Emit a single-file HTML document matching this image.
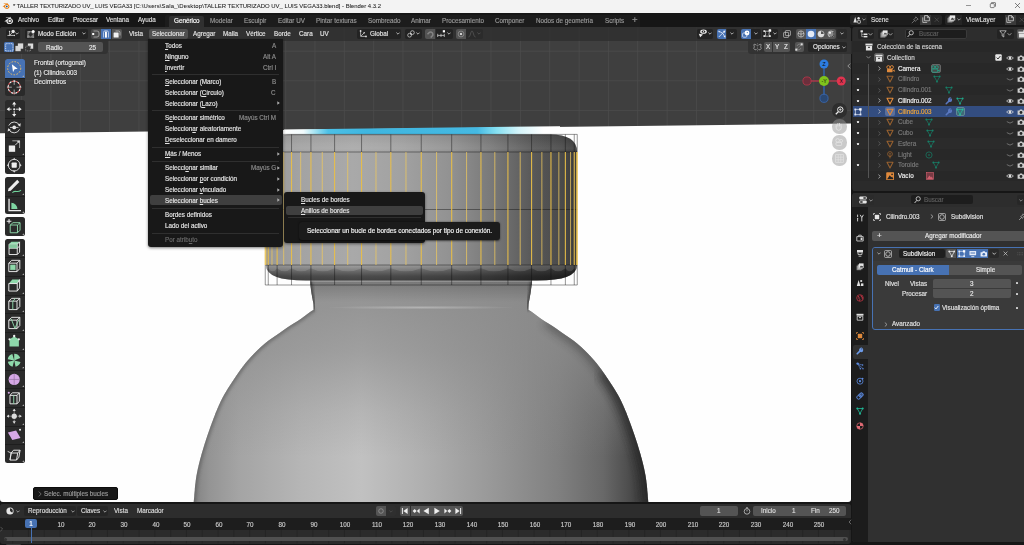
<!DOCTYPE html>
<html lang="es"><head><meta charset="utf-8"><title>Blender</title>
<style>

html,body{margin:0;padding:0;background:#181818;}
body{width:1024px;height:545px;overflow:hidden;font-family:"Liberation Sans",sans-serif;}
#app{position:relative;width:1024px;height:545px;overflow:hidden;background:#161616;font-size:6.3px;line-height:8px;color:#d8d8d8;}
#app div,#app span,#app svg{position:absolute;box-sizing:border-box;}
.t{white-space:nowrap;line-height:8px;height:8px;will-change:transform;-webkit-text-stroke:0.16px currentColor;}
#titlebar{left:0;top:0;width:1024px;height:12.6px;background:#f3f3f3;}
#titlebar .t{-webkit-text-stroke:0.06px currentColor;color:#1b1b1b;font-size:5.96px;left:12.5px;top:2px;}
#topbar{left:0;top:13px;width:1024px;height:14px;background:#161616;}
#topbar .t{top:2.5px;color:#dedede;}
#topbar .ws{color:#989898;top:3.6px;}
#app span.in{position:static;}
.fld{background:#1c1c1c;border-radius:2px;}
.btn{background:#2b2b2b;border-radius:2px;}

#viewport{left:0;top:27px;width:851px;height:475px;background:#3f3f3f;overflow:hidden;border-radius:3px;}

#vhdr{left:0;top:27px;width:851px;height:13.5px;background:rgba(46,46,46,0.8);border-radius:3px 3px 0 0;}
#vhdr .t{top:3px;color:#e2e2e2;}
#vhdr .b{top:1.5px;height:10px;background:#232323;border-radius:2px;}
#vhdr .bl{background:#4772b3;}
#vhdr .g{background:#545454;}
.chev{width:4px;height:3px;}
#tsL{left:0;top:40.5px;width:108px;height:13.5px;background:rgba(48,48,48,0.85);border-radius:0 0 3px 0;}
#tsR{left:747.5px;top:40.5px;width:104px;height:13.5px;background:rgba(48,48,48,0.85);border-radius:0 0 0 3px;}

#tools .grp{left:4.5px;width:20px;background:#2a2a2a;border-radius:2.5px;overflow:hidden;}
#tools .sep{left:0;width:20px;height:0.6px;background:#1e1e1e;}
#tools svg{left:1.8px;}

#menu{left:148px;top:38.5px;width:135.3px;height:208px;background:#181818;border-radius:0 0 3px 3px;box-shadow:0 1px 3px rgba(0,0,0,0.5);}
#menu .t,#sub .t{color:#e4e4e4;}
#menu .k{color:#8c8c8c;right:7.5px;}
#menu .sp{left:4px;width:127px;height:0.6px;background:#2f2f2f;}
#menu u,#sub u{text-decoration-thickness:0.5px;text-underline-offset:0.6px;}
#sub{left:284px;top:192.4px;width:141px;height:50.6px;background:#181818;border-radius:3px;box-shadow:0 1px 3px rgba(0,0,0,0.5);}
#tip{left:299.4px;top:222px;width:200.4px;height:18px;background:#1b1b1b;border-radius:3px;box-shadow:0 0.5px 2px rgba(0,0,0,0.6);}
.arr{width:3px;height:4px;}

#outl{left:852.2px;top:27px;width:171.8px;height:164.4px;background:#282828;border-radius:3px 0 0 3px;overflow:hidden;}
#outl .hd{left:0;top:0;width:171px;height:13.5px;background:#2d2d2d;}
#outl .t{color:#d4d4d4;}
#outl .dim{color:#7c7c7c;}
#outl .b{top:1.8px;height:10px;background:#232323;border-radius:2px;}

#props{left:852.2px;top:193px;width:171.8px;height:348.5px;background:#303030;border-radius:3px 0 0 3px;overflow:hidden;}
#props .t{color:#e0e0e0;}
#props .tabs{left:-0.8px;top:14px;width:15.6px;height:335px;background:#1c1c1c;}
#props .f{background:#545454;}

#tl{left:0;top:504px;width:851px;height:39.5px;background:#2b2b2b;border-radius:3px;overflow:hidden;}
#tl .hd{left:0;top:0;width:851px;height:13.8px;background:#2d2d2d;}
#tl .ruler{left:0;top:13.8px;width:851px;height:12px;background:#1d1d1d;}
#tl .t{color:#dcdcdc;}
#tl .b{top:2px;height:10px;border-radius:2px;background:#252525;}
#tl .f{top:2px;height:10px;background:#545454;}

</style></head>
<body>
<div id="app">
<div id="titlebar"><span class="t"><span class="in" style="letter-spacing:-0.09px">* TALLER TEXTURIZADO UV_ LUIS VEGA33 </span><span class="in" style="letter-spacing:0.14px">[C:\Users\Sala_\Desktop\</span>TALLER TEXTURIZADO UV_ LUIS VEGA33.blend] - Blender 4.3.2</span>
<svg style="left:1.5px;top:2px" width="8" height="8" viewBox="0 0 16 16"><path d="M1 9.5 L8 4 L3.5 4 L3.5 3 L9.5 3 L10.5 2.2 L11.5 3 L10.8 3.8 C14 5 15.5 7.5 14.8 10 C14 12.8 11 14 8.5 13.6 C6 13.2 4.4 11.5 4.4 9.5 Z" fill="#ea7600"/><circle cx="9.6" cy="8.9" r="3.2" fill="#fff"/><circle cx="9.6" cy="8.9" r="1.9" fill="#265787"/></svg>
<svg style="left:960px;top:0" width="64" height="13" viewBox="0 0 64 13"><path d="M6 5.5 H11" stroke="#555" stroke-width="0.6" fill="none"/><rect x="30.3" y="3.6" width="4" height="4" rx="0.8" fill="none" stroke="#333" stroke-width="0.6"/><path d="M31.3 3.4 V3 q0-.4 .4-.4 H35 q.5 0 .5 .5 V6.2 q0 .4-.4 .4" fill="none" stroke="#333" stroke-width="0.6"/><path d="M55 3 L60 8 M60 3 L55 8" stroke="#333" stroke-width="0.6" fill="none"/></svg>
</div>
<div id="topbar">
<svg style="left:4px;top:2.5px" width="10" height="9" viewBox="0 0 16 14"><path d="M0.5 8.5 L7.5 3 L3 3 L3 2 L9 2 L10 1 L11 2 L10.3 2.8 C13.5 4 15 6.5 14.3 9 C13.5 11.8 10.5 13 8 12.6 C5.5 12.2 3.9 10.5 3.9 8.5 Z" fill="#e6e6e6"/><circle cx="9.1" cy="7.9" r="3.3" fill="#161616"/><circle cx="9.1" cy="7.9" r="2" fill="#e6e6e6"/></svg>
<span class="t" style="left:18px">Archivo</span>
<span class="t" style="left:48px">Editar</span>
<span class="t" style="left:73px">Procesar</span>
<span class="t" style="left:105.5px">Ventana</span>
<span class="t" style="left:137.5px">Ayuda</span>
<div style="left:165px;top:2.2px;width:475px;height:12.2px;background:#1c1c1c;border-radius:2px 2px 0 0"></div>
<div style="left:169px;top:2.5px;width:35px;height:11.9px;background:#303030;border-radius:2px 2px 0 0"></div>
<span class="t" style="left:174px;color:#fff;top:3.6px">Genérico</span>
<span class="t ws" style="left:210px">Modelar</span>
<span class="t ws" style="left:243.5px">Esculpir</span>
<span class="t ws" style="left:277.5px">Editar UV</span>
<span class="t ws" style="left:315.5px">Pintar texturas</span>
<span class="t ws" style="left:367.5px">Sombreado</span>
<span class="t ws" style="left:411px">Animar</span>
<span class="t ws" style="left:441.5px">Procesamiento</span>
<span class="t ws" style="left:495px">Componer</span>
<span class="t ws" style="left:536px">Nodos de geometría</span>
<span class="t ws" style="left:604.5px">Scripts</span>
<span class="t ws" style="left:632.4px;font-size:9.6px;top:3.3px">+</span>
<div class="btn" style="left:850px;top:1.5px;width:92px;height:10px;background:#252525"></div>
<div class="fld" style="left:867px;top:1.5px;width:53px;height:10px;border-radius:0"></div>
<span class="t" style="left:871px;top:2.5px">Scene</span>
<div style="left:920px;top:1.5px;width:11px;height:10px;background:#3a3a3a"></div>
<div class="btn" style="left:945px;top:1.5px;width:80px;height:10px;background:#252525"></div>
<div class="fld" style="left:962px;top:1.5px;width:43px;height:10px;border-radius:0"></div>
<span class="t" style="left:965.5px;top:2.5px">ViewLayer</span>
<div style="left:1005px;top:1.5px;width:11px;height:10px;background:#3a3a3a"></div>
<svg style="left:852.5px;top:2.5px" width="8" height="8" viewBox="0 0 8 8"><path d="M0.4 6.6 L2.2 0.8 L4 6.6Z" fill="#e2e2e2"/><circle cx="5.6" cy="2.2" r="1.2" fill="#e2e2e2"/><rect x="4.6" y="4.4" width="2.8" height="2.8" rx="0.4" stroke="#e2e2e2" stroke-width="0.7" fill="#252525"/></svg>
<svg style="left:861.5px;top:5.4px" width="4" height="3" viewBox="0 0 4 3"><path d="M0.4 0.6 L2 2.2 L3.6 0.6" stroke="#ccc" stroke-width="0.7" fill="none"/></svg>
<svg style="left:910.5px;top:2.5px" width="8" height="8" viewBox="0 0 8 8"><path d="M4.8 0.8 L7.2 3.2 L5.8 3.6 L4.4 5.4 L2.6 3.6 L4.4 2.2Z M3.4 4.6 L0.8 7.2" stroke="#8a8a8a" stroke-width="0.7" fill="none"/></svg>
<svg style="left:921.6px;top:2.4px" width="8" height="8" viewBox="0 0 8 8"><path d="M2.6 0.6 H5.6 L7.4 2.4 V5.8 H2.6Z" stroke="#e6e6e6" stroke-width="0.7" fill="none"/><path d="M5.4 0.6 V2.6 H7.4" stroke="#e6e6e6" stroke-width="0.6" fill="none"/><path d="M0.8 2.4 V7.4 H5.2" stroke="#e6e6e6" stroke-width="0.7" fill="none"/></svg>
<svg style="left:934px;top:3.8px" width="5.5" height="5.5" viewBox="0 0 5 5"><path d="M0.6 0.6 L4.4 4.4 M4.4 0.6 L0.6 4.4" stroke="#555" stroke-width="0.6"/></svg>
<svg style="left:947px;top:2.4px" width="9" height="8" viewBox="0 0 9 8"><rect x="0.4" y="2.8" width="5" height="4.8" fill="#7c7c7c"/><rect x="1.6" y="1.6" width="5.2" height="5" fill="#b4b4b4"/><rect x="2.8" y="0.4" width="5.4" height="5" fill="#e6e6e6"/><path d="M3.6 4.8 L5.2 2.6 L6.4 3.8 L7.4 3 V4.8Z" fill="#3a3a3a"/></svg>
<svg style="left:957px;top:5.4px" width="4" height="3" viewBox="0 0 4 3"><path d="M0.4 0.6 L2 2.2 L3.6 0.6" stroke="#ccc" stroke-width="0.7" fill="none"/></svg>
<svg style="left:1006.4px;top:2.4px" width="8" height="8" viewBox="0 0 8 8"><path d="M2.6 0.6 H5.6 L7.4 2.4 V5.8 H2.6Z" stroke="#e6e6e6" stroke-width="0.7" fill="none"/><path d="M5.4 0.6 V2.6 H7.4" stroke="#e6e6e6" stroke-width="0.6" fill="none"/><path d="M0.8 2.4 V7.4 H5.2" stroke="#e6e6e6" stroke-width="0.7" fill="none"/></svg>
<svg style="left:1018.6px;top:3.8px" width="5.5" height="5.5" viewBox="0 0 5 5"><path d="M0.6 0.6 L4.4 4.4 M4.4 0.6 L0.6 4.4" stroke="#555" stroke-width="0.6"/></svg>
</div><div id="viewport"><svg width="851" height="475" viewBox="0 0 851 475" style="left:0;top:0">
<defs>
<linearGradient id="gBody" x1="193" x2="649" y1="0" y2="0" gradientUnits="userSpaceOnUse">
<stop offset="0" stop-color="#828282"/><stop offset="0.035" stop-color="#949494"/><stop offset="0.1" stop-color="#a4a4a4"/><stop offset="0.24" stop-color="#b6b6b6"/><stop offset="0.37" stop-color="#c1c1c1"/><stop offset="0.5" stop-color="#b0b0b0"/><stop offset="0.65" stop-color="#999"/><stop offset="0.8" stop-color="#808080"/><stop offset="0.9" stop-color="#686868"/><stop offset="0.95" stop-color="#505050"/><stop offset="0.985" stop-color="#3c3c3c"/><stop offset="1" stop-color="#363636"/></linearGradient>
<linearGradient id="gBodyV" x1="0" x2="0" y1="280" y2="430" gradientUnits="userSpaceOnUse">
<stop offset="0" stop-color="#8b8b8b" stop-opacity="0.8"/><stop offset="0.3" stop-color="#8b8b8b" stop-opacity="0.62"/><stop offset="0.7" stop-color="#8b8b8b" stop-opacity="0.22"/><stop offset="1" stop-color="#8b8b8b" stop-opacity="0"/></linearGradient>
<linearGradient id="gCap" x1="266" x2="577" y1="0" y2="0" gradientUnits="userSpaceOnUse">
<stop offset="0" stop-color="#989898"/><stop offset="0.11" stop-color="#a3a3a3"/><stop offset="0.28" stop-color="#a9a9a9"/><stop offset="0.43" stop-color="#a2a2a2"/><stop offset="0.59" stop-color="#929292"/><stop offset="0.72" stop-color="#7a7a7a"/><stop offset="0.85" stop-color="#5a5a5a"/><stop offset="0.95" stop-color="#4a4a4a"/><stop offset="1" stop-color="#3a3a3a"/></linearGradient>
<linearGradient id="gCapTop" x1="0" x2="0" y1="107.5" y2="125" gradientUnits="userSpaceOnUse">
<stop offset="0" stop-color="#000" stop-opacity="0.22"/><stop offset="0.1" stop-color="#000" stop-opacity="0.02"/><stop offset="0.55" stop-color="#fff" stop-opacity="0.04"/><stop offset="0.8" stop-color="#fff" stop-opacity="0.07"/><stop offset="1" stop-color="#fff" stop-opacity="0"/></linearGradient>
<linearGradient id="gCapBot" x1="0" x2="0" y1="237.8" y2="254" gradientUnits="userSpaceOnUse">
<stop offset="0" stop-color="#000" stop-opacity="0"/><stop offset="0.02" stop-color="#000" stop-opacity="0.14"/><stop offset="0.4" stop-color="#000" stop-opacity="0.38"/><stop offset="0.7" stop-color="#000" stop-opacity="0.55"/><stop offset="1" stop-color="#000" stop-opacity="0.62"/></linearGradient>
<linearGradient id="gCyan" x1="284" x2="560" y1="0" y2="0" gradientUnits="userSpaceOnUse">
<stop offset="0" stop-color="#fff"/><stop offset="0.07" stop-color="#f2fbfd"/><stop offset="0.11" stop-color="#a8e4f2"/><stop offset="0.16" stop-color="#4cc0e6"/><stop offset="0.3" stop-color="#3fb6e0"/><stop offset="0.7" stop-color="#45b9e2"/><stop offset="0.77" stop-color="#86e0f2"/><stop offset="0.85" stop-color="#d4f4fa"/><stop offset="0.94" stop-color="#fff"/></linearGradient>
<linearGradient id="gNeckSh" x1="0" x2="0" y1="255" y2="275" gradientUnits="userSpaceOnUse">
<stop offset="0" stop-color="#000" stop-opacity="0.18"/><stop offset="1" stop-color="#000" stop-opacity="0"/></linearGradient>
<filter id="fb4" x="-20%" y="-20%" width="140%" height="140%"><feGaussianBlur stdDeviation="4"/></filter>
<filter id="fb2" x="-20%" y="-20%" width="140%" height="140%"><feGaussianBlur stdDeviation="1.6"/></filter>
<radialGradient id="gHl" cx="421" cy="280.5" r="95" gradientUnits="userSpaceOnUse" gradientTransform="translate(0 274.9) scale(1 0.02)"><stop offset="0" stop-color="#fff" stop-opacity="0.3"/><stop offset="1" stop-color="#fff" stop-opacity="0"/></radialGradient>
<clipPath id="cpBottle"><path d="M310.0 250.0 L310.0 251.0 L310.1 252.0 L310.1 253.0 L310.1 254.0 L310.2 255.0 L310.3 256.0 L310.4 257.0 L310.5 258.0 L310.5 259.0 L310.6 260.0 L310.8 261.0 L310.9 262.0 L311.0 263.0 L311.1 264.0 L311.3 265.0 L311.4 266.0 L311.6 267.0 L311.8 268.0 L312.0 269.0 L312.1 270.0 L312.3 271.0 L312.5 272.0 L312.7 273.0 L312.9 274.0 L313.1 275.0 L313.3 276.0 L313.4 277.0 L313.5 278.0 L313.5 279.0 L313.6 280.0 L313.6 281.0 L313.6 282.0 L313.6 283.0 L311.6 284.0 L310.1 285.0 L308.8 286.0 L307.4 287.0 L306.1 288.0 L304.8 289.0 L303.4 290.0 L302.1 291.0 L300.7 292.0 L299.2 293.0 L297.7 294.0 L296.1 295.0 L294.4 296.0 L292.8 297.0 L291.2 298.0 L289.6 299.0 L288.1 300.0 L286.6 301.0 L285.2 302.0 L283.8 303.0 L282.4 304.0 L281.0 305.0 L279.6 306.0 L278.1 307.0 L276.7 308.0 L275.2 309.0 L273.7 310.0 L272.3 311.0 L270.8 312.0 L269.4 313.0 L268.0 314.0 L266.8 315.0 L265.5 316.0 L264.3 317.0 L263.2 318.0 L262.0 319.0 L260.9 320.0 L259.8 321.0 L258.8 322.0 L257.7 323.0 L256.7 324.0 L255.7 325.0 L254.7 326.0 L253.7 327.0 L252.8 328.0 L251.8 329.0 L250.9 330.0 L250.0 331.0 L249.1 332.0 L248.2 333.0 L247.3 334.0 L246.5 335.0 L245.6 336.0 L244.8 337.0 L244.1 338.0 L243.3 339.0 L242.5 340.0 L241.8 341.0 L241.0 342.0 L240.3 343.0 L239.6 344.0 L238.9 345.0 L238.2 346.0 L237.5 347.0 L236.8 348.0 L236.1 349.0 L235.5 350.0 L234.8 351.0 L234.1 352.0 L233.5 353.0 L232.8 354.0 L232.1 355.0 L231.5 356.0 L230.8 357.0 L230.2 358.0 L229.5 359.0 L228.9 360.0 L228.2 361.0 L227.6 362.0 L227.0 363.0 L226.4 364.0 L225.8 365.0 L225.2 366.0 L224.6 367.0 L224.0 368.0 L223.5 369.0 L222.9 370.0 L222.4 371.0 L221.9 372.0 L221.4 373.0 L220.9 374.0 L220.4 375.0 L220.0 376.0 L219.5 377.0 L219.0 378.0 L218.6 379.0 L218.2 380.0 L217.7 381.0 L217.3 382.0 L216.9 383.0 L216.5 384.0 L216.0 385.0 L215.6 386.0 L215.2 387.0 L214.9 388.0 L214.5 389.0 L214.1 390.0 L213.7 391.0 L213.3 392.0 L213.0 393.0 L212.6 394.0 L212.2 395.0 L211.8 396.0 L211.5 397.0 L211.1 398.0 L210.7 399.0 L210.4 400.0 L210.0 401.0 L209.7 402.0 L209.3 403.0 L209.0 404.0 L208.6 405.0 L208.3 406.0 L207.9 407.0 L207.6 408.0 L207.2 409.0 L206.9 410.0 L206.6 411.0 L206.2 412.0 L205.9 413.0 L205.6 414.0 L205.3 415.0 L204.9 416.0 L204.6 417.0 L204.3 418.0 L204.0 419.0 L203.7 420.0 L203.4 421.0 L203.1 422.0 L202.8 423.0 L202.5 424.0 L202.2 425.0 L201.9 426.0 L201.6 427.0 L201.3 428.0 L201.1 429.0 L200.8 430.0 L200.5 431.0 L200.2 432.0 L200.0 433.0 L199.7 434.0 L199.5 435.0 L199.2 436.0 L199.0 437.0 L198.7 438.0 L198.5 439.0 L198.3 440.0 L198.0 441.0 L197.8 442.0 L197.6 443.0 L197.4 444.0 L197.2 445.0 L197.0 446.0 L196.8 447.0 L196.6 448.0 L196.4 449.0 L196.3 450.0 L196.1 451.0 L196.0 452.0 L195.8 453.0 L195.7 454.0 L195.6 455.0 L195.5 456.0 L195.3 457.0 L195.2 458.0 L195.1 459.0 L195.0 460.0 L194.9 461.0 L194.8 462.0 L194.8 463.0 L194.7 464.0 L194.6 465.0 L194.5 466.0 L194.4 467.0 L194.3 468.0 L194.3 469.0 L194.2 470.0 L194.1 471.0 L194.0 472.0 L193.9 473.0 L193.8 474.0 L193.7 475.0 L193.6 476.0 L648.4 476.0 L648.3 475.0 L648.2 474.0 L648.1 473.0 L648.0 472.0 L647.9 471.0 L647.8 470.0 L647.7 469.0 L647.7 468.0 L647.6 467.0 L647.5 466.0 L647.4 465.0 L647.3 464.0 L647.2 463.0 L647.2 462.0 L647.1 461.0 L647.0 460.0 L646.9 459.0 L646.8 458.0 L646.7 457.0 L646.5 456.0 L646.4 455.0 L646.3 454.0 L646.2 453.0 L646.0 452.0 L645.9 451.0 L645.7 450.0 L645.6 449.0 L645.4 448.0 L645.2 447.0 L645.0 446.0 L644.8 445.0 L644.6 444.0 L644.4 443.0 L644.2 442.0 L644.0 441.0 L643.7 440.0 L643.5 439.0 L643.3 438.0 L643.0 437.0 L642.8 436.0 L642.5 435.0 L642.3 434.0 L642.0 433.0 L641.8 432.0 L641.5 431.0 L641.2 430.0 L640.9 429.0 L640.7 428.0 L640.4 427.0 L640.1 426.0 L639.8 425.0 L639.5 424.0 L639.2 423.0 L638.9 422.0 L638.6 421.0 L638.3 420.0 L638.0 419.0 L637.7 418.0 L637.4 417.0 L637.1 416.0 L636.7 415.0 L636.4 414.0 L636.1 413.0 L635.8 412.0 L635.4 411.0 L635.1 410.0 L634.8 409.0 L634.4 408.0 L634.1 407.0 L633.7 406.0 L633.4 405.0 L633.0 404.0 L632.7 403.0 L632.3 402.0 L632.0 401.0 L631.6 400.0 L631.3 399.0 L630.9 398.0 L630.5 397.0 L630.2 396.0 L629.8 395.0 L629.4 394.0 L629.0 393.0 L628.7 392.0 L628.3 391.0 L627.9 390.0 L627.5 389.0 L627.1 388.0 L626.8 387.0 L626.4 386.0 L626.0 385.0 L625.5 384.0 L625.1 383.0 L624.7 382.0 L624.3 381.0 L623.8 380.0 L623.4 379.0 L623.0 378.0 L622.5 377.0 L622.0 376.0 L621.6 375.0 L621.1 374.0 L620.6 373.0 L620.1 372.0 L619.6 371.0 L619.1 370.0 L618.5 369.0 L618.0 368.0 L617.4 367.0 L616.8 366.0 L616.2 365.0 L615.6 364.0 L615.0 363.0 L614.4 362.0 L613.8 361.0 L613.1 360.0 L612.5 359.0 L611.8 358.0 L611.2 357.0 L610.5 356.0 L609.9 355.0 L609.2 354.0 L608.5 353.0 L607.9 352.0 L607.2 351.0 L606.5 350.0 L605.9 349.0 L605.2 348.0 L604.5 347.0 L603.8 346.0 L603.1 345.0 L602.4 344.0 L601.7 343.0 L601.0 342.0 L600.2 341.0 L599.5 340.0 L598.7 339.0 L597.9 338.0 L597.2 337.0 L596.4 336.0 L595.5 335.0 L594.7 334.0 L593.8 333.0 L592.9 332.0 L592.0 331.0 L591.1 330.0 L590.2 329.0 L589.2 328.0 L588.3 327.0 L587.3 326.0 L586.3 325.0 L585.3 324.0 L584.3 323.0 L583.2 322.0 L582.2 321.0 L581.1 320.0 L580.0 319.0 L578.8 318.0 L577.7 317.0 L576.5 316.0 L575.2 315.0 L574.0 314.0 L572.6 313.0 L571.2 312.0 L569.7 311.0 L568.3 310.0 L566.8 309.0 L565.3 308.0 L563.9 307.0 L562.4 306.0 L561.0 305.0 L559.6 304.0 L558.2 303.0 L556.8 302.0 L555.4 301.0 L553.9 300.0 L552.4 299.0 L550.8 298.0 L549.2 297.0 L547.6 296.0 L545.9 295.0 L544.3 294.0 L542.8 293.0 L541.3 292.0 L539.9 291.0 L538.6 290.0 L537.2 289.0 L535.9 288.0 L534.6 287.0 L533.2 286.0 L531.9 285.0 L530.4 284.0 L528.4 283.0 L528.4 282.0 L528.4 281.0 L528.4 280.0 L528.5 279.0 L528.5 278.0 L528.6 277.0 L528.7 276.0 L528.9 275.0 L529.1 274.0 L529.3 273.0 L529.5 272.0 L529.7 271.0 L529.9 270.0 L530.0 269.0 L530.2 268.0 L530.4 267.0 L530.6 266.0 L530.7 265.0 L530.9 264.0 L531.0 263.0 L531.1 262.0 L531.2 261.0 L531.4 260.0 L531.5 259.0 L531.5 258.0 L531.6 257.0 L531.7 256.0 L531.8 255.0 L531.9 254.0 L531.9 253.0 L531.9 252.0 L532.0 251.0 L532.0 250.0Z"/></clipPath>
</defs>
<path d="M-7.7 0V110 M21.6 0V110 M50.9 0V110 M80.3 0V110 M109.6 0V110 M139.0 0V110 M168.3 0V110 M197.6 0V110 M227.0 0V110 M256.3 0V110 M285.7 0V110 M315.0 0V110 M344.3 0V110 M373.7 0V110 M403.0 0V110 M432.4 0V110 M461.7 0V110 M491.0 0V110 M520.4 0V110 M549.7 0V110 M579.1 0V110 M608.4 0V110 M637.7 0V110 M667.1 0V110 M696.4 0V110 M725.8 0V110 M755.1 0V110 M784.4 0V110 M813.8 0V110 M843.1 0V110 M0 24.2H851 M0 53.8H851 M0 83.4H851" stroke="#4d4d4d" stroke-width="0.8" fill="none"/>
<path d="M0 106.19999999999999 L851 96.5 V475 H0Z" fill="#fefefe"/>
<path d="M284 102.6 L560 99.2 L560 107.5 L284 107.5Z" fill="url(#gCyan)"/>
<path d="M310.0 250.0 L310.0 251.0 L310.1 252.0 L310.1 253.0 L310.1 254.0 L310.2 255.0 L310.3 256.0 L310.4 257.0 L310.5 258.0 L310.5 259.0 L310.6 260.0 L310.8 261.0 L310.9 262.0 L311.0 263.0 L311.1 264.0 L311.3 265.0 L311.4 266.0 L311.6 267.0 L311.8 268.0 L312.0 269.0 L312.1 270.0 L312.3 271.0 L312.5 272.0 L312.7 273.0 L312.9 274.0 L313.1 275.0 L313.3 276.0 L313.4 277.0 L313.5 278.0 L313.5 279.0 L313.6 280.0 L313.6 281.0 L313.6 282.0 L313.6 283.0 L311.6 284.0 L310.1 285.0 L308.8 286.0 L307.4 287.0 L306.1 288.0 L304.8 289.0 L303.4 290.0 L302.1 291.0 L300.7 292.0 L299.2 293.0 L297.7 294.0 L296.1 295.0 L294.4 296.0 L292.8 297.0 L291.2 298.0 L289.6 299.0 L288.1 300.0 L286.6 301.0 L285.2 302.0 L283.8 303.0 L282.4 304.0 L281.0 305.0 L279.6 306.0 L278.1 307.0 L276.7 308.0 L275.2 309.0 L273.7 310.0 L272.3 311.0 L270.8 312.0 L269.4 313.0 L268.0 314.0 L266.8 315.0 L265.5 316.0 L264.3 317.0 L263.2 318.0 L262.0 319.0 L260.9 320.0 L259.8 321.0 L258.8 322.0 L257.7 323.0 L256.7 324.0 L255.7 325.0 L254.7 326.0 L253.7 327.0 L252.8 328.0 L251.8 329.0 L250.9 330.0 L250.0 331.0 L249.1 332.0 L248.2 333.0 L247.3 334.0 L246.5 335.0 L245.6 336.0 L244.8 337.0 L244.1 338.0 L243.3 339.0 L242.5 340.0 L241.8 341.0 L241.0 342.0 L240.3 343.0 L239.6 344.0 L238.9 345.0 L238.2 346.0 L237.5 347.0 L236.8 348.0 L236.1 349.0 L235.5 350.0 L234.8 351.0 L234.1 352.0 L233.5 353.0 L232.8 354.0 L232.1 355.0 L231.5 356.0 L230.8 357.0 L230.2 358.0 L229.5 359.0 L228.9 360.0 L228.2 361.0 L227.6 362.0 L227.0 363.0 L226.4 364.0 L225.8 365.0 L225.2 366.0 L224.6 367.0 L224.0 368.0 L223.5 369.0 L222.9 370.0 L222.4 371.0 L221.9 372.0 L221.4 373.0 L220.9 374.0 L220.4 375.0 L220.0 376.0 L219.5 377.0 L219.0 378.0 L218.6 379.0 L218.2 380.0 L217.7 381.0 L217.3 382.0 L216.9 383.0 L216.5 384.0 L216.0 385.0 L215.6 386.0 L215.2 387.0 L214.9 388.0 L214.5 389.0 L214.1 390.0 L213.7 391.0 L213.3 392.0 L213.0 393.0 L212.6 394.0 L212.2 395.0 L211.8 396.0 L211.5 397.0 L211.1 398.0 L210.7 399.0 L210.4 400.0 L210.0 401.0 L209.7 402.0 L209.3 403.0 L209.0 404.0 L208.6 405.0 L208.3 406.0 L207.9 407.0 L207.6 408.0 L207.2 409.0 L206.9 410.0 L206.6 411.0 L206.2 412.0 L205.9 413.0 L205.6 414.0 L205.3 415.0 L204.9 416.0 L204.6 417.0 L204.3 418.0 L204.0 419.0 L203.7 420.0 L203.4 421.0 L203.1 422.0 L202.8 423.0 L202.5 424.0 L202.2 425.0 L201.9 426.0 L201.6 427.0 L201.3 428.0 L201.1 429.0 L200.8 430.0 L200.5 431.0 L200.2 432.0 L200.0 433.0 L199.7 434.0 L199.5 435.0 L199.2 436.0 L199.0 437.0 L198.7 438.0 L198.5 439.0 L198.3 440.0 L198.0 441.0 L197.8 442.0 L197.6 443.0 L197.4 444.0 L197.2 445.0 L197.0 446.0 L196.8 447.0 L196.6 448.0 L196.4 449.0 L196.3 450.0 L196.1 451.0 L196.0 452.0 L195.8 453.0 L195.7 454.0 L195.6 455.0 L195.5 456.0 L195.3 457.0 L195.2 458.0 L195.1 459.0 L195.0 460.0 L194.9 461.0 L194.8 462.0 L194.8 463.0 L194.7 464.0 L194.6 465.0 L194.5 466.0 L194.4 467.0 L194.3 468.0 L194.3 469.0 L194.2 470.0 L194.1 471.0 L194.0 472.0 L193.9 473.0 L193.8 474.0 L193.7 475.0 L193.6 476.0 L648.4 476.0 L648.3 475.0 L648.2 474.0 L648.1 473.0 L648.0 472.0 L647.9 471.0 L647.8 470.0 L647.7 469.0 L647.7 468.0 L647.6 467.0 L647.5 466.0 L647.4 465.0 L647.3 464.0 L647.2 463.0 L647.2 462.0 L647.1 461.0 L647.0 460.0 L646.9 459.0 L646.8 458.0 L646.7 457.0 L646.5 456.0 L646.4 455.0 L646.3 454.0 L646.2 453.0 L646.0 452.0 L645.9 451.0 L645.7 450.0 L645.6 449.0 L645.4 448.0 L645.2 447.0 L645.0 446.0 L644.8 445.0 L644.6 444.0 L644.4 443.0 L644.2 442.0 L644.0 441.0 L643.7 440.0 L643.5 439.0 L643.3 438.0 L643.0 437.0 L642.8 436.0 L642.5 435.0 L642.3 434.0 L642.0 433.0 L641.8 432.0 L641.5 431.0 L641.2 430.0 L640.9 429.0 L640.7 428.0 L640.4 427.0 L640.1 426.0 L639.8 425.0 L639.5 424.0 L639.2 423.0 L638.9 422.0 L638.6 421.0 L638.3 420.0 L638.0 419.0 L637.7 418.0 L637.4 417.0 L637.1 416.0 L636.7 415.0 L636.4 414.0 L636.1 413.0 L635.8 412.0 L635.4 411.0 L635.1 410.0 L634.8 409.0 L634.4 408.0 L634.1 407.0 L633.7 406.0 L633.4 405.0 L633.0 404.0 L632.7 403.0 L632.3 402.0 L632.0 401.0 L631.6 400.0 L631.3 399.0 L630.9 398.0 L630.5 397.0 L630.2 396.0 L629.8 395.0 L629.4 394.0 L629.0 393.0 L628.7 392.0 L628.3 391.0 L627.9 390.0 L627.5 389.0 L627.1 388.0 L626.8 387.0 L626.4 386.0 L626.0 385.0 L625.5 384.0 L625.1 383.0 L624.7 382.0 L624.3 381.0 L623.8 380.0 L623.4 379.0 L623.0 378.0 L622.5 377.0 L622.0 376.0 L621.6 375.0 L621.1 374.0 L620.6 373.0 L620.1 372.0 L619.6 371.0 L619.1 370.0 L618.5 369.0 L618.0 368.0 L617.4 367.0 L616.8 366.0 L616.2 365.0 L615.6 364.0 L615.0 363.0 L614.4 362.0 L613.8 361.0 L613.1 360.0 L612.5 359.0 L611.8 358.0 L611.2 357.0 L610.5 356.0 L609.9 355.0 L609.2 354.0 L608.5 353.0 L607.9 352.0 L607.2 351.0 L606.5 350.0 L605.9 349.0 L605.2 348.0 L604.5 347.0 L603.8 346.0 L603.1 345.0 L602.4 344.0 L601.7 343.0 L601.0 342.0 L600.2 341.0 L599.5 340.0 L598.7 339.0 L597.9 338.0 L597.2 337.0 L596.4 336.0 L595.5 335.0 L594.7 334.0 L593.8 333.0 L592.9 332.0 L592.0 331.0 L591.1 330.0 L590.2 329.0 L589.2 328.0 L588.3 327.0 L587.3 326.0 L586.3 325.0 L585.3 324.0 L584.3 323.0 L583.2 322.0 L582.2 321.0 L581.1 320.0 L580.0 319.0 L578.8 318.0 L577.7 317.0 L576.5 316.0 L575.2 315.0 L574.0 314.0 L572.6 313.0 L571.2 312.0 L569.7 311.0 L568.3 310.0 L566.8 309.0 L565.3 308.0 L563.9 307.0 L562.4 306.0 L561.0 305.0 L559.6 304.0 L558.2 303.0 L556.8 302.0 L555.4 301.0 L553.9 300.0 L552.4 299.0 L550.8 298.0 L549.2 297.0 L547.6 296.0 L545.9 295.0 L544.3 294.0 L542.8 293.0 L541.3 292.0 L539.9 291.0 L538.6 290.0 L537.2 289.0 L535.9 288.0 L534.6 287.0 L533.2 286.0 L531.9 285.0 L530.4 284.0 L528.4 283.0 L528.4 282.0 L528.4 281.0 L528.4 280.0 L528.5 279.0 L528.5 278.0 L528.6 277.0 L528.7 276.0 L528.9 275.0 L529.1 274.0 L529.3 273.0 L529.5 272.0 L529.7 271.0 L529.9 270.0 L530.0 269.0 L530.2 268.0 L530.4 267.0 L530.6 266.0 L530.7 265.0 L530.9 264.0 L531.0 263.0 L531.1 262.0 L531.2 261.0 L531.4 260.0 L531.5 259.0 L531.5 258.0 L531.6 257.0 L531.7 256.0 L531.8 255.0 L531.9 254.0 L531.9 253.0 L531.9 252.0 L532.0 251.0 L532.0 250.0Z" fill="url(#gBody)"/>
<path d="M310.0 250.0 L310.0 251.0 L310.1 252.0 L310.1 253.0 L310.1 254.0 L310.2 255.0 L310.3 256.0 L310.4 257.0 L310.5 258.0 L310.5 259.0 L310.6 260.0 L310.8 261.0 L310.9 262.0 L311.0 263.0 L311.1 264.0 L311.3 265.0 L311.4 266.0 L311.6 267.0 L311.8 268.0 L312.0 269.0 L312.1 270.0 L312.3 271.0 L312.5 272.0 L312.7 273.0 L312.9 274.0 L313.1 275.0 L313.3 276.0 L313.4 277.0 L313.5 278.0 L313.5 279.0 L313.6 280.0 L313.6 281.0 L313.6 282.0 L313.6 283.0 L311.6 284.0 L310.1 285.0 L308.8 286.0 L307.4 287.0 L306.1 288.0 L304.8 289.0 L303.4 290.0 L302.1 291.0 L300.7 292.0 L299.2 293.0 L297.7 294.0 L296.1 295.0 L294.4 296.0 L292.8 297.0 L291.2 298.0 L289.6 299.0 L288.1 300.0 L286.6 301.0 L285.2 302.0 L283.8 303.0 L282.4 304.0 L281.0 305.0 L279.6 306.0 L278.1 307.0 L276.7 308.0 L275.2 309.0 L273.7 310.0 L272.3 311.0 L270.8 312.0 L269.4 313.0 L268.0 314.0 L266.8 315.0 L265.5 316.0 L264.3 317.0 L263.2 318.0 L262.0 319.0 L260.9 320.0 L259.8 321.0 L258.8 322.0 L257.7 323.0 L256.7 324.0 L255.7 325.0 L254.7 326.0 L253.7 327.0 L252.8 328.0 L251.8 329.0 L250.9 330.0 L250.0 331.0 L249.1 332.0 L248.2 333.0 L247.3 334.0 L246.5 335.0 L245.6 336.0 L244.8 337.0 L244.1 338.0 L243.3 339.0 L242.5 340.0 L241.8 341.0 L241.0 342.0 L240.3 343.0 L239.6 344.0 L238.9 345.0 L238.2 346.0 L237.5 347.0 L236.8 348.0 L236.1 349.0 L235.5 350.0 L234.8 351.0 L234.1 352.0 L233.5 353.0 L232.8 354.0 L232.1 355.0 L231.5 356.0 L230.8 357.0 L230.2 358.0 L229.5 359.0 L228.9 360.0 L228.2 361.0 L227.6 362.0 L227.0 363.0 L226.4 364.0 L225.8 365.0 L225.2 366.0 L224.6 367.0 L224.0 368.0 L223.5 369.0 L222.9 370.0 L222.4 371.0 L221.9 372.0 L221.4 373.0 L220.9 374.0 L220.4 375.0 L220.0 376.0 L219.5 377.0 L219.0 378.0 L218.6 379.0 L218.2 380.0 L217.7 381.0 L217.3 382.0 L216.9 383.0 L216.5 384.0 L216.0 385.0 L215.6 386.0 L215.2 387.0 L214.9 388.0 L214.5 389.0 L214.1 390.0 L213.7 391.0 L213.3 392.0 L213.0 393.0 L212.6 394.0 L212.2 395.0 L211.8 396.0 L211.5 397.0 L211.1 398.0 L210.7 399.0 L210.4 400.0 L210.0 401.0 L209.7 402.0 L209.3 403.0 L209.0 404.0 L208.6 405.0 L208.3 406.0 L207.9 407.0 L207.6 408.0 L207.2 409.0 L206.9 410.0 L206.6 411.0 L206.2 412.0 L205.9 413.0 L205.6 414.0 L205.3 415.0 L204.9 416.0 L204.6 417.0 L204.3 418.0 L204.0 419.0 L203.7 420.0 L203.4 421.0 L203.1 422.0 L202.8 423.0 L202.5 424.0 L202.2 425.0 L201.9 426.0 L201.6 427.0 L201.3 428.0 L201.1 429.0 L200.8 430.0 L200.5 431.0 L200.2 432.0 L200.0 433.0 L199.7 434.0 L199.5 435.0 L199.2 436.0 L199.0 437.0 L198.7 438.0 L198.5 439.0 L198.3 440.0 L198.0 441.0 L197.8 442.0 L197.6 443.0 L197.4 444.0 L197.2 445.0 L197.0 446.0 L196.8 447.0 L196.6 448.0 L196.4 449.0 L196.3 450.0 L196.1 451.0 L196.0 452.0 L195.8 453.0 L195.7 454.0 L195.6 455.0 L195.5 456.0 L195.3 457.0 L195.2 458.0 L195.1 459.0 L195.0 460.0 L194.9 461.0 L194.8 462.0 L194.8 463.0 L194.7 464.0 L194.6 465.0 L194.5 466.0 L194.4 467.0 L194.3 468.0 L194.3 469.0 L194.2 470.0 L194.1 471.0 L194.0 472.0 L193.9 473.0 L193.8 474.0 L193.7 475.0 L193.6 476.0 L648.4 476.0 L648.3 475.0 L648.2 474.0 L648.1 473.0 L648.0 472.0 L647.9 471.0 L647.8 470.0 L647.7 469.0 L647.7 468.0 L647.6 467.0 L647.5 466.0 L647.4 465.0 L647.3 464.0 L647.2 463.0 L647.2 462.0 L647.1 461.0 L647.0 460.0 L646.9 459.0 L646.8 458.0 L646.7 457.0 L646.5 456.0 L646.4 455.0 L646.3 454.0 L646.2 453.0 L646.0 452.0 L645.9 451.0 L645.7 450.0 L645.6 449.0 L645.4 448.0 L645.2 447.0 L645.0 446.0 L644.8 445.0 L644.6 444.0 L644.4 443.0 L644.2 442.0 L644.0 441.0 L643.7 440.0 L643.5 439.0 L643.3 438.0 L643.0 437.0 L642.8 436.0 L642.5 435.0 L642.3 434.0 L642.0 433.0 L641.8 432.0 L641.5 431.0 L641.2 430.0 L640.9 429.0 L640.7 428.0 L640.4 427.0 L640.1 426.0 L639.8 425.0 L639.5 424.0 L639.2 423.0 L638.9 422.0 L638.6 421.0 L638.3 420.0 L638.0 419.0 L637.7 418.0 L637.4 417.0 L637.1 416.0 L636.7 415.0 L636.4 414.0 L636.1 413.0 L635.8 412.0 L635.4 411.0 L635.1 410.0 L634.8 409.0 L634.4 408.0 L634.1 407.0 L633.7 406.0 L633.4 405.0 L633.0 404.0 L632.7 403.0 L632.3 402.0 L632.0 401.0 L631.6 400.0 L631.3 399.0 L630.9 398.0 L630.5 397.0 L630.2 396.0 L629.8 395.0 L629.4 394.0 L629.0 393.0 L628.7 392.0 L628.3 391.0 L627.9 390.0 L627.5 389.0 L627.1 388.0 L626.8 387.0 L626.4 386.0 L626.0 385.0 L625.5 384.0 L625.1 383.0 L624.7 382.0 L624.3 381.0 L623.8 380.0 L623.4 379.0 L623.0 378.0 L622.5 377.0 L622.0 376.0 L621.6 375.0 L621.1 374.0 L620.6 373.0 L620.1 372.0 L619.6 371.0 L619.1 370.0 L618.5 369.0 L618.0 368.0 L617.4 367.0 L616.8 366.0 L616.2 365.0 L615.6 364.0 L615.0 363.0 L614.4 362.0 L613.8 361.0 L613.1 360.0 L612.5 359.0 L611.8 358.0 L611.2 357.0 L610.5 356.0 L609.9 355.0 L609.2 354.0 L608.5 353.0 L607.9 352.0 L607.2 351.0 L606.5 350.0 L605.9 349.0 L605.2 348.0 L604.5 347.0 L603.8 346.0 L603.1 345.0 L602.4 344.0 L601.7 343.0 L601.0 342.0 L600.2 341.0 L599.5 340.0 L598.7 339.0 L597.9 338.0 L597.2 337.0 L596.4 336.0 L595.5 335.0 L594.7 334.0 L593.8 333.0 L592.9 332.0 L592.0 331.0 L591.1 330.0 L590.2 329.0 L589.2 328.0 L588.3 327.0 L587.3 326.0 L586.3 325.0 L585.3 324.0 L584.3 323.0 L583.2 322.0 L582.2 321.0 L581.1 320.0 L580.0 319.0 L578.8 318.0 L577.7 317.0 L576.5 316.0 L575.2 315.0 L574.0 314.0 L572.6 313.0 L571.2 312.0 L569.7 311.0 L568.3 310.0 L566.8 309.0 L565.3 308.0 L563.9 307.0 L562.4 306.0 L561.0 305.0 L559.6 304.0 L558.2 303.0 L556.8 302.0 L555.4 301.0 L553.9 300.0 L552.4 299.0 L550.8 298.0 L549.2 297.0 L547.6 296.0 L545.9 295.0 L544.3 294.0 L542.8 293.0 L541.3 292.0 L539.9 291.0 L538.6 290.0 L537.2 289.0 L535.9 288.0 L534.6 287.0 L533.2 286.0 L531.9 285.0 L530.4 284.0 L528.4 283.0 L528.4 282.0 L528.4 281.0 L528.4 280.0 L528.5 279.0 L528.5 278.0 L528.6 277.0 L528.7 276.0 L528.9 275.0 L529.1 274.0 L529.3 273.0 L529.5 272.0 L529.7 271.0 L529.9 270.0 L530.0 269.0 L530.2 268.0 L530.4 267.0 L530.6 266.0 L530.7 265.0 L530.9 264.0 L531.0 263.0 L531.1 262.0 L531.2 261.0 L531.4 260.0 L531.5 259.0 L531.5 258.0 L531.6 257.0 L531.7 256.0 L531.8 255.0 L531.9 254.0 L531.9 253.0 L531.9 252.0 L532.0 251.0 L532.0 250.0Z" fill="url(#gBodyV)"/>
<g clip-path="url(#cpBottle)"><rect x="300" y="255" width="242" height="20" fill="url(#gNeckSh)"/><rect x="330" y="278.5" width="182" height="4.5" fill="url(#gHl)"/><path d="M310.2 255.0 L310.4 257.0 L310.5 259.0 L310.8 261.0 L311.0 263.0 L311.3 265.0 L311.6 267.0 L312.0 269.0 L312.3 271.0 L312.7 273.0 L313.1 275.0 L313.4 277.0 L313.5 279.0 L313.6 281.0 L313.6 283.0" stroke="#222" stroke-width="3.5" fill="none" filter="url(#fb2)" opacity="0.75"/><path d="M531.8 255.0 L531.6 257.0 L531.5 259.0 L531.2 261.0 L531.0 263.0 L530.7 265.0 L530.4 267.0 L530.0 269.0 L529.7 271.0 L529.3 273.0 L528.9 275.0 L528.6 277.0 L528.5 279.0 L528.4 281.0 L528.4 283.0" stroke="#222" stroke-width="3.5" fill="none" filter="url(#fb2)" opacity="0.75"/><path d="M545.9 295.0 L549.2 297.0 L552.4 299.0 L555.4 301.0 L558.2 303.0 L561.0 305.0 L563.9 307.0 L566.8 309.0 L569.7 311.0 L572.6 313.0 L575.2 315.0 L577.7 317.0 L580.0 319.0 L582.2 321.0 L584.3 323.0 L586.3 325.0 L588.3 327.0 L590.2 329.0 L592.0 331.0 L593.8 333.0 L595.5 335.0 L597.2 337.0 L598.7 339.0 L600.2 341.0 L601.7 343.0 L603.1 345.0 L604.5 347.0 L605.9 349.0 L607.2 351.0 L608.5 353.0 L609.9 355.0 L611.2 357.0 L612.5 359.0 L613.8 361.0 L615.0 363.0 L616.2 365.0 L617.4 367.0 L618.5 369.0 L619.6 371.0 L620.6 373.0 L621.6 375.0 L622.5 377.0 L623.4 379.0 L624.3 381.0 L625.1 383.0 L626.0 385.0 L626.8 387.0 L627.5 389.0 L628.3 391.0 L629.0 393.0 L629.8 395.0 L630.5 397.0 L631.3 399.0 L632.0 401.0 L632.7 403.0 L633.4 405.0 L634.1 407.0 L634.8 409.0 L635.4 411.0 L636.1 413.0 L636.7 415.0 L637.4 417.0 L638.0 419.0 L638.6 421.0 L639.2 423.0 L639.8 425.0 L640.4 427.0 L640.9 429.0 L641.5 431.0 L642.0 433.0 L642.5 435.0 L643.0 437.0 L643.5 439.0 L644.0 441.0 L644.4 443.0 L644.8 445.0 L645.2 447.0 L645.6 449.0 L645.9 451.0 L646.2 453.0 L646.4 455.0 L646.7 457.0 L646.9 459.0 L647.1 461.0 L647.2 463.0 L647.4 465.0 L647.6 467.0 L647.7 469.0 L647.9 471.0 L648.1 473.0 L648.3 475.0 L648.4 477.0" stroke="#262626" stroke-width="9" fill="none" filter="url(#fb4)" opacity="0.4"/><path d="M603.1 345.0 L604.5 347.0 L605.9 349.0 L607.2 351.0 L608.5 353.0 L609.9 355.0 L611.2 357.0 L612.5 359.0 L613.8 361.0 L615.0 363.0 L616.2 365.0 L617.4 367.0 L618.5 369.0 L619.6 371.0 L620.6 373.0 L621.6 375.0 L622.5 377.0 L623.4 379.0 L624.3 381.0 L625.1 383.0 L626.0 385.0 L626.8 387.0 L627.5 389.0 L628.3 391.0 L629.0 393.0 L629.8 395.0 L630.5 397.0 L631.3 399.0 L632.0 401.0 L632.7 403.0 L633.4 405.0 L634.1 407.0 L634.8 409.0 L635.4 411.0 L636.1 413.0 L636.7 415.0 L637.4 417.0 L638.0 419.0 L638.6 421.0 L639.2 423.0 L639.8 425.0 L640.4 427.0 L640.9 429.0 L641.5 431.0 L642.0 433.0 L642.5 435.0 L643.0 437.0 L643.5 439.0 L644.0 441.0 L644.4 443.0 L644.8 445.0 L645.2 447.0 L645.6 449.0 L645.9 451.0 L646.2 453.0 L646.4 455.0 L646.7 457.0 L646.9 459.0 L647.1 461.0 L647.2 463.0 L647.4 465.0 L647.6 467.0 L647.7 469.0 L647.9 471.0 L648.1 473.0 L648.3 475.0 L648.4 477.0" stroke="#262626" stroke-width="13" fill="none" filter="url(#fb4)" opacity="0.6"/><path d="M313.6 282.0 L311.6 284.0 L308.8 286.0 L306.1 288.0 L303.4 290.0 L300.7 292.0 L297.7 294.0 L294.4 296.0 L291.2 298.0 L288.1 300.0 L285.2 302.0 L282.4 304.0 L279.6 306.0 L276.7 308.0 L273.7 310.0 L270.8 312.0 L268.0 314.0 L265.5 316.0 L263.2 318.0 L260.9 320.0 L258.8 322.0 L256.7 324.0 L254.7 326.0 L252.8 328.0 L250.9 330.0 L249.1 332.0 L247.3 334.0 L245.6 336.0 L244.1 338.0 L242.5 340.0 L241.0 342.0 L239.6 344.0 L238.2 346.0 L236.8 348.0 L235.5 350.0 L234.1 352.0 L232.8 354.0 L231.5 356.0 L230.2 358.0 L228.9 360.0 L227.6 362.0 L226.4 364.0 L225.2 366.0 L224.0 368.0 L222.9 370.0 L221.9 372.0 L220.9 374.0 L220.0 376.0 L219.0 378.0 L218.2 380.0 L217.3 382.0 L216.5 384.0 L215.6 386.0 L214.9 388.0 L214.1 390.0 L213.3 392.0 L212.6 394.0 L211.8 396.0 L211.1 398.0 L210.4 400.0 L209.7 402.0 L209.0 404.0 L208.3 406.0 L207.6 408.0 L206.9 410.0 L206.2 412.0 L205.6 414.0 L204.9 416.0 L204.3 418.0 L203.7 420.0 L203.1 422.0 L202.5 424.0 L201.9 426.0 L201.3 428.0 L200.8 430.0 L200.2 432.0 L199.7 434.0 L199.2 436.0 L198.7 438.0 L198.3 440.0 L197.8 442.0 L197.4 444.0 L197.0 446.0 L196.6 448.0 L196.3 450.0 L196.0 452.0 L195.7 454.0 L195.5 456.0 L195.2 458.0 L195.0 460.0 L194.8 462.0 L194.7 464.0 L194.5 466.0 L194.3 468.0 L194.2 470.0 L194.0 472.0 L193.8 474.0 L193.6 476.0 L193.6 478.0" stroke="#5c5c5c" stroke-width="5" fill="none" filter="url(#fb2)" opacity="0.6"/></g>
<path d="M266 124.6 Q266 107.6 293 107.6 H550 Q577 107.6 577 124.6 V238 Q577 253.60000000000002 537 253.60000000000002 H306 Q266 253.60000000000002 266 238Z" fill="url(#gCap)"/>
<path d="M266 124.6 Q266 107.6 293 107.6 H550 Q577 107.6 577 124.6 V238 Q577 253.60000000000002 537 253.60000000000002 H306 Q266 253.60000000000002 266 238Z" fill="url(#gCapTop)"/>
<path d="M266 124.6 Q266 107.6 293 107.6 H550 Q577 107.6 577 124.6 V238 Q577 253.60000000000002 537 253.60000000000002 H306 Q266 253.60000000000002 266 238Z" fill="url(#gCapBot)"/>
<clipPath id="cpCap"><path d="M266 124.6 Q266 107.6 293 107.6 H550 Q577 107.6 577 124.6 V238 Q577 253.60000000000002 537 253.60000000000002 H306 Q266 253.60000000000002 266 238Z"/></clipPath><g clip-path="url(#cpCap)"><path d="M265.2 238 V241.2 Q266.7 247.5 268.2 241.2 V238Z M268.2 238 V241.2 Q272.7 247.5 277.1 241.2 V238Z M277.1 238 V241.2 Q284.3 247.5 291.5 241.2 V238Z M291.5 238 V241.2 Q301.2 247.5 310.9 241.2 V238Z M310.9 238 V241.2 Q322.8 247.5 334.6 241.2 V238Z M334.6 238 V241.2 Q348.1 247.5 361.6 241.2 V238Z M361.6 238 V241.2 Q376.2 247.5 390.8 241.2 V238Z M390.8 238 V241.2 Q406.0 247.5 421.2 241.2 V238Z M421.2 238 V241.2 Q436.5 247.5 451.7 241.2 V238Z M451.7 238 V241.2 Q466.3 247.5 480.9 241.2 V238Z M480.9 238 V241.2 Q494.4 247.5 507.9 241.2 V238Z M507.9 238 V241.2 Q519.7 247.5 531.6 241.2 V238Z M531.6 238 V241.2 Q541.3 247.5 551.0 241.2 V238Z M551.0 238 V241.2 Q558.2 247.5 565.4 241.2 V238Z M565.4 238 V241.2 Q569.8 247.5 574.3 241.2 V238Z M574.3 238 V241.2 Q575.8 247.5 577.2 241.2 V238Z" fill="#fff" fill-opacity="0.13"/></g>
<path d="M265.25 107.4V125M265.25 238V258 M268.25 107.4V125M268.25 238V258 M277.12 107.4V125M277.12 238V258 M291.54 107.4V125M291.54 238V258 M310.94 107.4V125M310.94 238V258 M334.58 107.4V125M334.58 238V258 M361.55 107.4V125M361.55 238V258 M390.82 107.4V125M390.82 238V258 M421.25 107.4V125M421.25 238V258 M451.68 107.4V125M451.68 238V258 M480.95 107.4V125M480.95 238V258 M507.92 107.4V125M507.92 238V258 M531.56 107.4V125M531.56 238V258 M550.96 107.4V125M550.96 238V258 M565.38 107.4V125M565.38 238V258 M574.25 107.4V125M574.25 238V258 M577.25 107.4V125M577.25 238V258 M265.25 107.4H577.25 M265.25 125H577.25 M265.25 182.5H577.25 M265.25 238H577.25 M265.25 258H577.25" stroke="#111" stroke-width="0.55" fill="none" stroke-opacity="0.8"/>
<path d="M266.00 125V238 M271.97 125V238 M283.67 125V238 M300.66 125V238 M322.28 125V238 M347.71 125V238 M375.97 125V238 M405.96 125V238 M436.54 125V238 M466.53 125V238 M494.79 125V238 M520.22 125V238 M541.84 125V238 M558.83 125V238 M570.53 125V238 M576.50 125V238" stroke="#ecc85e" stroke-width="1.1" fill="none" stroke-opacity="0.7"/>
<path d="M265.25 125V238 M268.25 125V238 M277.12 125V238 M291.54 125V238 M310.94 125V238 M334.58 125V238 M361.55 125V238 M390.82 125V238 M421.25 125V238 M451.68 125V238 M480.95 125V238 M507.92 125V238 M531.56 125V238 M550.96 125V238 M565.38 125V238 M574.25 125V238 M577.25 125V238" stroke="#e8be48" stroke-width="1.15" fill="none" stroke-opacity="0.92"/>
</svg></div><div id="vhdr">
<div class="b" style="left:5.5px;width:14.5px"></div>
<svg style="left:6.6px;top:2.3px" width="8.6" height="8.6" viewBox="0 0 8 8"><path d="M2.4 2.4 V6 M0.4 6 H7.6 M2.4 6 L4.6 3.8" stroke="#ddd" stroke-width="0.7" fill="none"/><path d="M2.4 1.4 L3.2 2.8 H1.6Z M7.9 6 L6.6 5.2 V6.8Z" fill="#ddd"/><circle cx="5.7" cy="2.3" r="1.6" fill="#e6e6e6"/></svg>
<svg class="chev" style="left:15.2px;top:5.2px" viewBox="0 0 4 3"><path d="M0.4 0.6 L2 2.2 L3.6 0.6" stroke="#ccc" stroke-width="0.85" fill="none"/></svg>
<div class="b" style="left:25px;width:62.5px"></div>
<svg style="left:26.8px;top:2.6px" width="8" height="8" viewBox="0 0 8 8"><rect x="0.3" y="1" width="6.8" height="6.8" fill="#787878"/><path d="M3.6 2 L5.8 4.4 L3.6 6.8 L1.4 4.4Z" fill="#2c2c2c"/><path d="M1.4 1 H3 V2 H1.4Z M0.3 5.6 H1.6 V7.8 H0.3Z M5.4 6.4 H7.1 V7.8 H5.4Z" fill="#9a9a9a"/><circle cx="6.2" cy="1.6" r="1.5" fill="#fff"/></svg>
<span class="t" style="left:38px">Modo Edición</span>
<svg class="chev" style="left:82px;top:5.2px" viewBox="0 0 4 3"><path d="M0.4 0.6 L2 2.2 L3.6 0.6" stroke="#ccc" stroke-width="0.85" fill="none"/></svg>
<div class="b" style="left:90.5px;width:10px;background:#4a4a4a;border-radius:2px 0 0 2px"></div>
<div class="b bl" style="left:101px;width:10px;border-radius:0"></div>
<div class="b" style="left:111.5px;width:10px;background:#545454;border-radius:0 2px 2px 0"></div>
<svg style="left:91.5px;top:2.5px" width="8" height="8" viewBox="0 0 8 8"><path d="M1.5 1 H5 Q7 1 7 3 V5 Q7 7 5 7 H1.5" stroke="#bbb" stroke-width="0.7" fill="none"/><rect x="0.2" y="3" width="2" height="2" fill="#fff"/></svg>
<svg style="left:102px;top:2.5px" width="8" height="8" viewBox="0 0 8 8"><path d="M1.5 7.5 V2.5 Q1.5 0.8 3.2 0.8 H4.8 Q6.5 0.8 6.5 2.5 V7.5" stroke="#dce6f5" stroke-width="0.7" fill="none"/><rect x="3" y="1.6" width="1.9" height="6" fill="#fff"/></svg>
<svg style="left:112.5px;top:2.5px" width="8" height="8" viewBox="0 0 8 8"><path d="M2.5 1 H5.5 Q7 1 7 2.5 V5.5" stroke="#ccc" stroke-width="0.7" fill="none"/><rect x="0.6" y="2.4" width="5" height="5" rx="0.5" fill="#f2f2f2"/></svg>
<span class="t" style="left:129px">Vista</span>
<div style="left:148.5px;top:1.5px;width:39.5px;height:10px;background:#505050;border-radius:2px"></div>
<span class="t" style="left:151.7px">Seleccionar</span>
<span class="t" style="left:192.5px">Agregar</span>
<span class="t" style="left:223px">Malla</span>
<span class="t" style="left:246px">Vértice</span>
<span class="t" style="left:274px">Borde</span>
<span class="t" style="left:298.5px">Cara</span>
<span class="t" style="left:320px">UV</span>
<div class="b" style="left:357px;width:43.5px"></div>
<svg style="left:359px;top:2.5px" width="8" height="8" viewBox="0 0 8 8"><path d="M1.6 0.8 V6.4 H7.2 M2 6 L5 3" stroke="#ddd" stroke-width="0.7" fill="none"/><circle cx="1.6" cy="1" r="0.9" fill="#ddd"/><circle cx="7" cy="6.4" r="0.9" fill="#ddd"/><circle cx="5.2" cy="2.8" r="0.8" fill="#ddd"/></svg>
<span class="t" style="left:370px">Global</span>
<svg class="chev" style="left:396.3px;top:5.2px" viewBox="0 0 4 3"><path d="M0.4 0.6 L2 2.2 L3.6 0.6" stroke="#ccc" stroke-width="0.85" fill="none"/></svg>
<div class="b" style="left:405px;width:16.5px"></div>
<svg style="left:406.5px;top:2.5px" width="8" height="8" viewBox="0 0 8 8"><circle cx="2.6" cy="5.2" r="1.9" stroke="#ddd" stroke-width="0.7" fill="none"/><circle cx="5.4" cy="2.6" r="1.9" stroke="#ddd" stroke-width="0.7" fill="none"/><circle cx="4" cy="4" r="0.8" fill="#ddd"/></svg>
<svg class="chev" style="left:416px;top:5.2px" viewBox="0 0 4 3"><path d="M0.4 0.6 L2 2.2 L3.6 0.6" stroke="#ccc" stroke-width="0.85" fill="none"/></svg>
<div class="b" style="left:425px;width:10px;background:#545454;border-radius:2px 0 0 2px"></div>
<svg style="left:426px;top:2.5px" width="8" height="8" viewBox="0 0 8 8"><path d="M1.5 4.3 L3 2.8 A2.2 2.2 0 0 1 6.2 6 L4.7 7.5" stroke="#858585" stroke-width="1.5" fill="none"/></svg>
<div class="b" style="left:435.5px;width:17px;border-radius:0 2px 2px 0"></div>
<svg style="left:436.5px;top:2.5px" width="9" height="8" viewBox="0 0 9 8"><path d="M0.7 3.8 V7 M4 3.8 V7 M7.3 3.8 V7 M0.7 5.4 H7.3" stroke="#ddd" stroke-width="0.7" fill="none"/><rect x="5.8" y="0.2" width="2.2" height="2.2" fill="#fff"/></svg>
<svg class="chev" style="left:447px;top:5.2px" viewBox="0 0 4 3"><path d="M0.4 0.6 L2 2.2 L3.6 0.6" stroke="#ccc" stroke-width="0.85" fill="none"/></svg>
<div class="b" style="left:455.5px;width:10px;background:#545454;border-radius:2px 0 0 2px"></div>
<svg style="left:456.5px;top:2.5px" width="8" height="8" viewBox="0 0 8 8"><circle cx="4" cy="4" r="2.9" stroke="#9a9a9a" stroke-width="0.7" fill="none"/><circle cx="4" cy="4" r="1.1" fill="#eee"/></svg>
<div class="b" style="left:466px;width:16.5px;background:#2b2b2b;border-radius:0 2px 2px 0"></div>
<svg style="left:467.5px;top:2.5px" width="8" height="8" viewBox="0 0 8 8"><path d="M0.5 7 C2.5 7 2.6 1 4 1 C5.4 1 5.5 7 7.5 7" stroke="#5c5c5c" stroke-width="0.7" fill="none"/></svg>
<svg class="chev" style="left:477px;top:5.2px" viewBox="0 0 4 3"><path d="M0.4 0.6 L2 2.2 L3.6 0.6" stroke="#555" stroke-width="0.85" fill="none"/></svg>
<div class="b" style="left:697px;width:16px"></div>
<svg style="left:697.5px;top:2px" width="9" height="9" viewBox="0 0 9 9"><path d="M0.8 4.8 L5 5.4 L2.2 8.2 Z" fill="#eee"/><ellipse cx="5.5" cy="2.7" rx="3.3" ry="2.1" fill="#eee"/><ellipse cx="5.5" cy="2.7" rx="1.9" ry="1.1" fill="#232323"/><circle cx="5.5" cy="2.7" r="0.6" fill="#eee"/></svg>
<svg class="chev" style="left:707.5px;top:5.2px" viewBox="0 0 4 3"><path d="M0.4 0.6 L2 2.2 L3.6 0.6" stroke="#ccc" stroke-width="0.85" fill="none"/></svg>
<div class="b bl" style="left:716.8px;width:9.7px;border-radius:2px 0 0 2px"></div>
<svg style="left:717.5px;top:2.5px" width="8" height="8" viewBox="0 0 8 8"><path d="M0.8 7 L6.6 1.2 M0.8 1.6 C4 2 6 4 6.6 7.2" stroke="#e8eefa" stroke-width="0.8" fill="none"/><path d="M7.4 0.4 L4.8 0.9 L6.9 3 Z M7.3 7.8 L5.6 6.2 L7.6 5.5Z M0.2 0.8 L2 1 L1 2.6Z" fill="#e8eefa"/></svg>
<div class="b" style="left:726.5px;width:10.3px;border-radius:0 2px 2px 0"></div>
<svg class="chev" style="left:729.7px;top:5.2px" viewBox="0 0 4 3"><path d="M0.4 0.6 L2 2.2 L3.6 0.6" stroke="#ccc" stroke-width="0.85" fill="none"/></svg>
<div class="b bl" style="left:741px;width:10px;border-radius:2px 0 0 2px"></div>
<svg style="left:742px;top:2.5px" width="8" height="8" viewBox="0 0 8 8"><rect x="0.6" y="3" width="4.2" height="4.2" rx="1" stroke="#e8eefa" stroke-width="0.7" fill="none"/><circle cx="5" cy="3" r="2.4" fill="#fff"/><circle cx="5.3" cy="2.6" r="0.6" fill="#4772b3"/></svg>
<div class="b" style="left:751px;width:10.3px;border-radius:0 2px 2px 0"></div>
<svg class="chev" style="left:754.3px;top:5.2px" viewBox="0 0 4 3"><path d="M0.4 0.6 L2 2.2 L3.6 0.6" stroke="#ccc" stroke-width="0.85" fill="none"/></svg>
<div class="b" style="left:762.3px;width:16px"></div>
<svg style="left:763px;top:2.2px" width="9" height="9" viewBox="0 0 9 9"><path d="M1.5 2.2 H6 M1.5 7.2 H7 M2.2 2 Q3.2 4.6 2.2 7.4 M6.4 3 Q5.4 5 6.6 7.4" stroke="#ddd" stroke-width="0.7" fill="none"/><rect x="5.6" y="0.2" width="2.6" height="2.6" rx="0.5" fill="#fff"/><rect x="0.4" y="1.2" width="1.8" height="1.8" fill="#ddd"/><rect x="0.4" y="6.2" width="1.8" height="1.8" fill="#ddd"/><rect x="6" y="6.2" width="1.8" height="1.8" fill="#ddd"/></svg>
<svg class="chev" style="left:773px;top:5.2px" viewBox="0 0 4 3"><path d="M0.4 0.6 L2 2.2 L3.6 0.6" stroke="#ccc" stroke-width="0.85" fill="none"/></svg>
<div class="b" style="left:782.3px;width:9.7px;background:#2e2e2e"></div>
<svg style="left:783px;top:2.5px" width="8" height="8" viewBox="0 0 8 8"><rect x="0.6" y="2.4" width="5" height="5" rx="0.6" stroke="#ccc" stroke-width="0.7" fill="none"/><rect x="2.4" y="0.6" width="5" height="5" rx="0.6" stroke="#ccc" stroke-width="0.7" fill="none"/></svg>
<div class="b g" style="left:796px;width:9.8px;border-radius:2px 0 0 2px"></div>
<div class="b bl" style="left:806px;width:9.8px;border-radius:0"></div>
<div class="b g" style="left:816px;width:9.8px;border-radius:0"></div>
<div class="b g" style="left:826px;width:9.8px;border-radius:0 2px 2px 0"></div>
<svg style="left:797px;top:2.5px" width="8" height="8" viewBox="0 0 8 8"><circle cx="4" cy="4" r="3.1" stroke="#ddd" stroke-width="0.6" fill="none"/><path d="M4 0.9 V7.1 M1 3.4 Q4 5 7 3.4" stroke="#ddd" stroke-width="0.6" fill="none"/></svg>
<svg style="left:807px;top:2.5px" width="8" height="8" viewBox="0 0 8 8"><circle cx="4" cy="4" r="3.3" fill="#e4ebf7"/></svg>
<svg style="left:817px;top:2.5px" width="8" height="8" viewBox="0 0 8 8"><circle cx="4" cy="4" r="3.1" stroke="#ddd" stroke-width="0.6" fill="none"/><path d="M4 4 V0.9 A3.1 3.1 0 0 0 0.9 4Z M4 4 H7.1 A3.1 3.1 0 0 1 4 7.1Z" fill="#ddd"/><path d="M4 4 V7.1 A3.1 3.1 0 0 1 0.9 4Z" fill="#ddd"/></svg>
<svg style="left:827px;top:2.5px" width="8" height="8" viewBox="0 0 8 8"><circle cx="4" cy="4" r="3.1" stroke="#ddd" stroke-width="0.6" fill="#8a8a8a"/><circle cx="3" cy="2.8" r="1.1" fill="#eee"/><path d="M6.4 2.2 A3.1 3.1 0 0 1 3 7" stroke="#333" stroke-width="0.9" fill="none"/></svg>
<div class="b" style="left:837px;width:9.5px;background:#2a2a2a"></div>
<svg class="chev" style="left:839.8px;top:5.2px" viewBox="0 0 4 3"><path d="M0.4 0.6 L2 2.2 L3.6 0.6" stroke="#ccc" stroke-width="0.85" fill="none"/></svg>
</div>
<div id="tsL">
<div style="left:4.4px;top:1.7px;width:9.7px;height:9.8px;background:#4772b3;border-radius:1.5px"></div>
<svg style="left:5px;top:2.5px" width="8.6" height="8.6" viewBox="0 0 9 9"><rect x="0.7" y="0.7" width="7.6" height="7.6" stroke="#e8eefa" stroke-width="0.9" stroke-dasharray="1.1 0.8" fill="none"/></svg>
<svg style="left:15px;top:2.5px" width="8.6" height="8.6" viewBox="0 0 9 9"><rect x="0.4" y="3" width="5.6" height="5.6" fill="#d4d4d4"/><rect x="3" y="0.4" width="5.6" height="5.6" fill="#d8d8d8"/></svg>
<svg style="left:25px;top:2.5px" width="8.6" height="8.6" viewBox="0 0 9 9"><rect x="0.7" y="3.3" width="5" height="5" stroke="#9a9a9a" stroke-width="0.8" stroke-dasharray="1 0.8" fill="none"/><path d="M3 0.4 H8.6 V6 H6 V3 H3Z" fill="#ddd"/></svg>
<div style="left:38px;top:1.8px;width:65px;height:10px;background:#545454;border-radius:2px"></div>
<span class="t" style="left:46px;top:3.6px;color:#e6e6e6">Radio</span><span class="t" style="left:88.5px;top:3.6px;color:#e6e6e6">25</span>
</div>
<div id="tsR">
<svg style="left:5px;top:2.2px" width="9" height="9" viewBox="0 0 9 9"><path d="M4.5 0.4 V8.6" stroke="#bbb" stroke-width="0.5" stroke-dasharray="0.9 0.7"/><path d="M3.6 2.2 Q1.5 0.6 0.8 1.6 Q1.8 4 0.8 5.6 Q1.8 7.8 3.6 6.4 M5.4 2.2 Q7.5 0.6 8.2 1.6 Q7.2 4 8.2 5.6 Q7.2 7.8 5.4 6.4" stroke="#ccc" stroke-width="0.6" fill="none"/></svg>
<div style="left:16.3px;top:1.6px;width:8.4px;height:10px;background:#545454;border-radius:2px 0 0 2px"></div>
<div style="left:25px;top:1.6px;width:8.6px;height:10px;background:#545454"></div>
<div style="left:33.9px;top:1.6px;width:8.6px;height:10px;background:#545454;border-radius:0 2px 2px 0"></div>
<span class="t" style="left:18.4px;top:2.6px;color:#e6e6e6">X</span><span class="t" style="left:27.2px;top:2.6px;color:#e6e6e6">Y</span><span class="t" style="left:36.3px;top:2.6px;color:#e6e6e6">Z</span>
<div style="left:47px;top:1.6px;width:9.6px;height:10px;background:#545454;border-radius:2px"></div>
<svg style="left:47.8px;top:2.4px" width="8" height="8" viewBox="0 0 8 8"><path d="M1.4 6.4 L6.4 1.6" stroke="#999" stroke-width="0.7" stroke-dasharray="1 0.7"/><path d="M2 3 A3 3 0 0 1 5 1 M6 5 A3 3 0 0 1 3 7" stroke="#999" stroke-width="0.6" fill="none"/><rect x="0.3" y="5.6" width="2.1" height="2.1" fill="#ddd"/><rect x="5.6" y="0.3" width="2.1" height="2.1" fill="#ddd"/></svg>
<div style="left:60.5px;top:1.6px;width:39px;height:10px;background:#262626;border-radius:2px"></div>
<span class="t" style="left:65px;top:2.6px;color:#e6e6e6">Opciones</span>
<svg class="chev" style="left:94.5px;top:5.3px" viewBox="0 0 4 3"><path d="M0.4 0.6 L2 2.2 L3.6 0.6" stroke="#ccc" stroke-width="0.85" fill="none"/></svg>
</div>
<span class="t" style="left:34px;top:59px;color:#f0f0f0;text-shadow:0 0 1px #000">Frontal (ortogonal)</span>
<span class="t" style="left:34px;top:68.5px;color:#f0f0f0;text-shadow:0 0 1px #000">(1) Cilindro.003</span>
<span class="t" style="left:34px;top:78px;color:#f0f0f0;text-shadow:0 0 1px #000">Decímetros</span>
<svg style="left:796px;top:54px" width="56" height="56" viewBox="796 54 56 56">
<path d="M824 64 V98.3" stroke="#2d6fd0" stroke-width="1.1"/><path d="M807 81 H841" stroke="#d8334c" stroke-width="1.1"/>
<circle cx="807" cy="81" r="4.1" fill="#6c2f3c" stroke="#c8364c" stroke-width="0.7"/>
<circle cx="824" cy="98.3" r="4.1" fill="#2b4872" stroke="#3a70c4" stroke-width="0.7"/>
<circle cx="824" cy="64" r="4.5" fill="#2d7de0"/><circle cx="841.2" cy="81" r="4.5" fill="#e0344f"/><circle cx="824" cy="81" r="5" fill="#7fc31c"/>
<text x="824" y="66" font-size="5.2" text-anchor="middle" fill="#0a0a0a" font-family="Liberation Sans, sans-serif">Z</text>
<text x="841.2" y="83" font-size="5.2" text-anchor="middle" fill="#0a0a0a" font-family="Liberation Sans, sans-serif">X</text>
<text x="824" y="83" font-size="5.2" text-anchor="middle" fill="#0a0a0a" font-family="Liberation Sans, sans-serif">-Y</text>
</svg>
<div style="left:832.3px;top:103.2px;width:14.4px;height:14.4px;border-radius:7.2px;background:#2e2e2e"></div>
<svg style="left:834.5px;top:105.5px" width="9" height="9" viewBox="0 0 9 9"><circle cx="5.3" cy="3.6" r="2.7" stroke="#eee" stroke-width="1" fill="none"/><path d="M3.4 5.6 L0.8 8.3" stroke="#eee" stroke-width="1.3"/><path d="M4 3.6 H6.6 M5.3 2.3 V4.9" stroke="#eee" stroke-width="0.7"/></svg>
<div style="left:832.3px;top:119.4px;width:14.4px;height:14.4px;border-radius:7.2px;background:rgba(150,150,150,0.5)"></div>
<div style="left:832.3px;top:135.4px;width:14.4px;height:14.4px;border-radius:7.2px;background:rgba(150,150,150,0.5)"></div>
<div style="left:832.3px;top:151.4px;width:14.4px;height:14.4px;border-radius:7.2px;background:rgba(150,150,150,0.5)"></div>
<svg style="left:835px;top:121.8px" width="8" height="9" viewBox="0 0 8 9"><path d="M1.2 5 V2.4 M2.8 4.4 V1.2 M4.4 4.4 V1 M6 4.6 V1.8 M1 4.6 Q0.6 8 3.6 8.4 Q6.8 8.4 6.4 4.4" stroke="#e4e4e4" stroke-width="0.9" fill="none"/></svg>
<svg style="left:834.5px;top:138.4px" width="9" height="8" viewBox="0 0 9 8"><circle cx="2.6" cy="2.4" r="1.8" stroke="#e4e4e4" stroke-width="0.8" fill="none"/><circle cx="6.2" cy="2.8" r="1.4" stroke="#e4e4e4" stroke-width="0.8" fill="none"/><rect x="1" y="4.4" width="5.6" height="3" rx="0.6" stroke="#e4e4e4" stroke-width="0.8" fill="none"/></svg>
<svg style="left:834.5px;top:153.9px" width="9" height="9" viewBox="0 0 9 9"><path d="M0.6 0.6 H8.4 V8.4 H0.6Z M0.6 3.2 H8.4 M0.6 5.8 H8.4 M3.2 0.6 V8.4 M5.8 0.6 V8.4" stroke="#e4e4e4" stroke-width="0.7" fill="none"/></svg>
<svg style="left:846.5px;top:63px" width="4" height="6" viewBox="0 0 4 6"><path d="M3.2 0.6 L0.8 3 L3.2 5.4" stroke="#bbb" stroke-width="0.7" fill="none"/></svg><div id="tools" style="left:0;top:0;width:30px;height:545px">
<div class="grp" style="top:59px;height:37.4px"><div style="left:0;top:0.0px;width:20px;height:18.72px;background:#4772b3"></div><svg width="16.4" height="16.4" viewBox="0 0 14 14" style="top:1.2px"><circle cx="7" cy="7" r="5.6" stroke="#f0c060" stroke-width="0.8" stroke-dasharray="1.4 1.2" fill="none"/><path d="M5 3.6 L10 7.4 L7.3 7.8 L6 10.4Z" fill="#fff"/></svg><svg style="left:17.2px;top:15.6px" width="2.2" height="2.2" viewBox="0 0 2 2"><path d="M2 0 V2 H0Z" fill="#aaa"/></svg><div class="sep" style="top:18.7px"></div><svg width="16.4" height="16.4" viewBox="0 0 14 14" style="top:19.9px"><circle cx="7" cy="7" r="5.2" stroke="#e05a5a" stroke-width="0.9" stroke-dasharray="2 1.6" fill="none"/><circle cx="7" cy="7" r="5.2" stroke="#fff" stroke-width="0.9" stroke-dasharray="1.6 2" stroke-dashoffset="1.8" fill="none"/><path d="M7 0.8 V5 M7 9 V13.2 M0.8 7 H5 M9 7 H13.2" stroke="#ddd" stroke-width="0.6"/></svg></div>
<div class="grp" style="top:99.5px;height:74.9px"><svg width="16.4" height="16.4" viewBox="0 0 14 14" style="top:1.2px"><path d="M7 1.4 V12.6 M1.4 7 H12.6" stroke="#ddd" stroke-width="0.8" stroke-dasharray="3.4 3.6"/><path d="M7 0.6 L8.8 3 H5.2Z M7 13.4 L8.8 11 H5.2Z M0.6 7 L3 5.2 V8.8Z M13.4 7 L11 5.2 V8.8Z" fill="#eee"/><circle cx="7" cy="7" r="0.9" fill="#eee"/></svg><div class="sep" style="top:18.7px"></div><svg width="16.4" height="16.4" viewBox="0 0 14 14" style="top:19.9px"><path d="M2.4 5.6 A5 5 0 0 1 11.6 5.6 M11.6 8.8 A5 5 0 0 1 2.4 8.8" stroke="#ddd" stroke-width="0.8" fill="none"/><path d="M12.6 3.6 L12.2 6.6 L9.8 5Z M1.4 10.6 L1.8 7.8 L4.2 9.4Z" fill="#ddd"/><circle cx="7" cy="7.2" r="1.6" fill="#eee"/><path d="M3.4 7.2 H10.6" stroke="#ddd" stroke-width="0.7"/></svg><div class="sep" style="top:37.4px"></div><svg width="16.4" height="16.4" viewBox="0 0 14 14" style="top:38.6px"><rect x="2.4" y="6.4" width="5.4" height="5.4" fill="#eee"/><path d="M5.4 2.4 H11.6 V8.6" stroke="#bbb" stroke-width="0.7" fill="none"/><path d="M8 6 L11 3" stroke="#ddd" stroke-width="0.8"/><path d="M11.8 2.2 L11.4 4.8 L9.2 2.6Z" fill="#ddd"/></svg><svg style="left:17.2px;top:53.0px" width="2.2" height="2.2" viewBox="0 0 2 2"><path d="M2 0 V2 H0Z" fill="#aaa"/></svg><div class="sep" style="top:56.2px"></div><svg width="16.4" height="16.4" viewBox="0 0 14 14" style="top:57.4px"><circle cx="7" cy="7" r="5" stroke="#ddd" stroke-width="0.8" fill="none"/><rect x="4.8" y="4.8" width="4.4" height="4.4" rx="0.6" fill="#eee"/><path d="M7 0.6 L8.2 2.4 H5.8Z M7 13.4 L8.2 11.6 H5.8Z M0.6 7 L2.4 5.8 V8.2Z M13.4 7 L11.6 5.8 V8.2Z" fill="#ddd"/></svg></div>
<div class="grp" style="top:177px;height:37.4px"><svg width="16.4" height="16.4" viewBox="0 0 14 14" style="top:1.2px"><path d="M2.2 9 L9.6 1.6 L11.4 3.4 L4 10.8 L1.6 11.4Z" fill="#eee"/><path d="M5.5 12.6 C7.5 9.6 9.5 13.4 12.8 10.4" stroke="#6fd39a" stroke-width="0.9" fill="none"/></svg><svg style="left:17.2px;top:15.6px" width="2.2" height="2.2" viewBox="0 0 2 2"><path d="M2 0 V2 H0Z" fill="#aaa"/></svg><div class="sep" style="top:18.7px"></div><svg width="16.4" height="16.4" viewBox="0 0 14 14" style="top:19.9px"><path d="M2.6 1.4 V11.6 H12.8" stroke="#eee" stroke-width="1.1" fill="none"/><path d="M4.6 10.2 V5 A5.2 5.2 0 0 1 9.8 10.2Z" fill="#7fd6a2"/></svg><svg style="left:17.2px;top:34.3px" width="2.2" height="2.2" viewBox="0 0 2 2"><path d="M2 0 V2 H0Z" fill="#aaa"/></svg></div>
<div class="grp" style="top:217px;height:18.7px"><svg width="16.4" height="16.4" viewBox="0 0 14 14" style="top:1.2px"><path d="M3.6 6 L6 4 H12 V10.4 L9.8 12.6 H3.6Z M3.6 6 H9.8 V12.6 M9.8 6 L12 4" stroke="#8ed8aa" stroke-width="0.8" fill="none"/><path d="M2.6 0.8 V4.8 M0.6 2.8 H4.6" stroke="#eee" stroke-width="0.9"/></svg><svg style="left:17.2px;top:15.6px" width="2.2" height="2.2" viewBox="0 0 2 2"><path d="M2 0 V2 H0Z" fill="#aaa"/></svg></div>
<div class="grp" style="top:238.5px;height:224.6px"><svg width="16.4" height="16.4" viewBox="0 0 14 14" style="top:1.2px"><path d="M2.6 3.6 L4.6 1.6 H11.6 L9.6 3.6Z" fill="#8ed8aa"/><path d="M2.6 3.6 H9.6 V12.4 H2.6Z M9.6 3.6 L11.6 1.6 V10.4 L9.6 12.4 M2.6 7 H9.6 L11.6 5.2" stroke="#eee" stroke-width="0.8" fill="none"/><rect x="2.6" y="3.6" width="7" height="3.4" fill="#8ed8aa" fill-opacity="0.9"/></svg><svg style="left:17.2px;top:15.6px" width="2.2" height="2.2" viewBox="0 0 2 2"><path d="M2 0 V2 H0Z" fill="#aaa"/></svg><div class="sep" style="top:18.7px"></div><svg width="16.4" height="16.4" viewBox="0 0 14 14" style="top:19.9px"><path d="M2.4 4.4 L4.8 2 H11.8 V9 L9.4 11.6 H2.4Z M2.4 4.4 H9.4 V11.6 M9.4 4.4 L11.8 2" stroke="#eee" stroke-width="0.8" fill="none"/><rect x="4" y="6" width="3.8" height="4" fill="#8ed8aa" stroke="#8ed8aa" stroke-width="0.6"/></svg><svg style="left:17.2px;top:34.3px" width="2.2" height="2.2" viewBox="0 0 2 2"><path d="M2 0 V2 H0Z" fill="#aaa"/></svg><div class="sep" style="top:37.4px"></div><svg width="16.4" height="16.4" viewBox="0 0 14 14" style="top:38.6px"><path d="M2.4 5.6 L5.4 2.2 H11.6 L9.6 5.6Z" fill="#8ed8aa"/><path d="M2.4 5.6 H9.6 V12 H2.4Z M9.6 5.6 L11.6 2.2 V9.4 L9.6 12" stroke="#eee" stroke-width="0.8" fill="none"/></svg><svg style="left:17.2px;top:53.0px" width="2.2" height="2.2" viewBox="0 0 2 2"><path d="M2 0 V2 H0Z" fill="#aaa"/></svg><div class="sep" style="top:56.2px"></div><svg width="16.4" height="16.4" viewBox="0 0 14 14" style="top:57.4px"><path d="M2.4 4.4 L4.8 2 H11.8 V9 L9.4 11.6 H2.4Z M2.4 4.4 H9.4 V11.6 M9.4 4.4 L11.8 2" stroke="#eee" stroke-width="0.8" fill="none"/><path d="M5.8 4.4 V11.6 M5.8 4.4 L8.2 2" stroke="#8ed8aa" stroke-width="0.8" fill="none"/></svg><svg style="left:17.2px;top:71.8px" width="2.2" height="2.2" viewBox="0 0 2 2"><path d="M2 0 V2 H0Z" fill="#aaa"/></svg><div class="sep" style="top:74.9px"></div><svg width="16.4" height="16.4" viewBox="0 0 14 14" style="top:76.1px"><path d="M2.4 4.4 L4.8 2 H11.8 V9 L9.4 11.6 H2.4Z M2.4 4.4 H9.4 V11.6 M9.4 4.4 L11.8 2" stroke="#eee" stroke-width="0.8" fill="none"/><path d="M4.4 3.2 L7.6 11.4 L11 4" stroke="#8ed8aa" stroke-width="0.8" fill="none"/></svg><svg style="left:17.2px;top:90.5px" width="2.2" height="2.2" viewBox="0 0 2 2"><path d="M2 0 V2 H0Z" fill="#aaa"/></svg><div class="sep" style="top:93.6px"></div><svg width="16.4" height="16.4" viewBox="0 0 14 14" style="top:94.8px"><path d="M3 11.6 V5.4 L7 3 L11 5.4 V11.6Z" fill="#8ed8aa"/><circle cx="7" cy="2.6" r="1" fill="#eee"/><circle cx="3" cy="5.4" r="0.9" fill="#eee"/><circle cx="11" cy="5.4" r="0.9" fill="#eee"/></svg><svg style="left:17.2px;top:109.2px" width="2.2" height="2.2" viewBox="0 0 2 2"><path d="M2 0 V2 H0Z" fill="#aaa"/></svg><div class="sep" style="top:112.3px"></div><svg width="16.4" height="16.4" viewBox="0 0 14 14" style="top:113.5px"><path d="M7 7.2 L7 1.6 A5.6 5.6 0 0 1 12.2 5.2Z M7 7.2 L12.4 8.6 A5.6 5.6 0 0 1 8.2 12.6Z M7 7.2 L5.6 12.6 A5.6 5.6 0 0 1 1.6 8.4Z M7 7.2 L1.5 6.2 A5.6 5.6 0 0 1 5.4 1.8Z" fill="#8ed8aa"/></svg><svg style="left:17.2px;top:127.9px" width="2.2" height="2.2" viewBox="0 0 2 2"><path d="M2 0 V2 H0Z" fill="#aaa"/></svg><div class="sep" style="top:131.0px"></div><svg width="16.4" height="16.4" viewBox="0 0 14 14" style="top:132.2px"><circle cx="7" cy="7.2" r="4.8" fill="#d6a8e6"/><path d="M2.2 7.2 H11.8 M7 2.4 V12" stroke="#8a6a98" stroke-width="0.5"/></svg><svg style="left:17.2px;top:146.6px" width="2.2" height="2.2" viewBox="0 0 2 2"><path d="M2 0 V2 H0Z" fill="#aaa"/></svg><div class="sep" style="top:149.8px"></div><svg width="16.4" height="16.4" viewBox="0 0 14 14" style="top:151.0px"><path d="M3.4 4.6 L5.4 2.4 H11.4 V9.6 L9.4 11.8 H3.4Z M3.4 4.6 H9.4 V11.8 M9.4 4.6 L11.4 2.4" stroke="#eee" stroke-width="0.8" fill="none"/><path d="M6.6 4.6 V11.8" stroke="#8ed8aa" stroke-width="0.8"/><circle cx="2.4" cy="2.4" r="0.9" fill="#d6a8e6"/></svg><svg style="left:17.2px;top:165.4px" width="2.2" height="2.2" viewBox="0 0 2 2"><path d="M2 0 V2 H0Z" fill="#aaa"/></svg><div class="sep" style="top:168.5px"></div><svg width="16.4" height="16.4" viewBox="0 0 14 14" style="top:169.7px"><path d="M7 1 V13 M1 7 H13" stroke="#ddd" stroke-width="0.7" stroke-dasharray="1 0.9"/><circle cx="7" cy="7" r="2.2" fill="#ddd"/><path d="M7 0.6 L8.4 2.6 H5.6Z M7 13.4 L8.4 11.4 H5.6Z M0.6 7 L2.6 5.6 V8.4Z M13.4 7 L11.4 5.6 V8.4Z" fill="#ddd"/></svg><svg style="left:17.2px;top:184.1px" width="2.2" height="2.2" viewBox="0 0 2 2"><path d="M2 0 V2 H0Z" fill="#aaa"/></svg><div class="sep" style="top:187.2px"></div><svg width="16.4" height="16.4" viewBox="0 0 14 14" style="top:188.4px"><path d="M1.6 4.6 L8.6 3 L12.4 9.4 L5.4 11Z" fill="#d6a8e6"/><circle cx="12" cy="2.4" r="0.9" fill="#eee"/></svg><svg style="left:17.2px;top:202.8px" width="2.2" height="2.2" viewBox="0 0 2 2"><path d="M2 0 V2 H0Z" fill="#aaa"/></svg><div class="sep" style="top:205.9px"></div><svg width="16.4" height="16.4" viewBox="0 0 14 14" style="top:207.1px"><path d="M4.4 6 L6.4 3.6 H12 L11 9.6 L9 12 H3.4Z M4.4 6 H10 L9 12 M10 6 L12 3.6" stroke="#eee" stroke-width="0.8" fill="none"/><path d="M1.4 4.6 L4.4 6 L3.4 12" stroke="#eee" stroke-width="0.7" fill="none"/></svg><svg style="left:17.2px;top:221.5px" width="2.2" height="2.2" viewBox="0 0 2 2"><path d="M2 0 V2 H0Z" fill="#aaa"/></svg></div>
</div>
<div style="left:33px;top:487px;width:84.5px;height:13px;background:#181818;border-radius:2px;border:0.5px solid #0c0c0c"></div>
<svg style="left:38px;top:490.5px" width="4" height="6" viewBox="0 0 4 6"><path d="M0.8 0.6 L3.2 3 L0.8 5.4" stroke="#8a8a8a" stroke-width="0.7" fill="none"/></svg>
<span class="t" style="left:44px;top:489.7px;color:#9a9a9a">Selec. múltiples bucles</span><div id="menu">
<span class="t" style="left:17.2px;top:3.6px"><u>T</u>odos</span>
<span class="t k" style="top:3.6px">A</span>
<span class="t" style="left:17.2px;top:14.4px"><u>N</u>inguno</span>
<span class="t k" style="top:14.4px">Alt A</span>
<span class="t" style="left:17.2px;top:25.1px"><u>I</u>nvertir</span>
<span class="t k" style="top:25.1px">Ctrl I</span>
<div class="sp" style="top:35.8px"></div>
<span class="t" style="left:17.2px;top:39.5px"><u>S</u>eleccionar (Marco)</span>
<span class="t k" style="top:39.5px">B</span>
<span class="t" style="left:17.2px;top:50.2px">Seleccionar (<u>C</u>írculo)</span>
<span class="t k" style="top:50.2px">C</span>
<span class="t" style="left:17.2px;top:61.0px">Seleccionar (<u>L</u>azo)</span>
<svg class="arr" style="left:129px;top:62.7px" viewBox="0 0 3 4"><path d="M0.3 0.3 L2.8 2 L0.3 3.7Z" fill="#b0b0b0"/></svg>
<div class="sp" style="top:71.7px"></div>
<span class="t" style="left:17.2px;top:75.6px">S<u>e</u>leccionar simétrico</span>
<span class="t k" style="top:75.6px">Mayús Ctrl M</span>
<span class="t" style="left:17.2px;top:86.2px">Seleccion<u>a</u>r aleatoriamente</span>
<span class="t" style="left:17.2px;top:97.0px"><u>D</u>eseleccionar en damero</span>
<div class="sp" style="top:108.3px"></div>
<span class="t" style="left:17.2px;top:111.5px"><u>M</u>ás / Menos</span>
<svg class="arr" style="left:129px;top:113.2px" viewBox="0 0 3 4"><path d="M0.3 0.3 L2.8 2 L0.3 3.7Z" fill="#b0b0b0"/></svg>
<div class="sp" style="top:122.3px"></div>
<span class="t" style="left:17.2px;top:125.8px">Selecci<u>o</u>nar similar</span>
<span class="t k" style="top:125.8px">Mayús G</span>
<svg class="arr" style="left:129px;top:127.5px" viewBox="0 0 3 4"><path d="M0.3 0.3 L2.8 2 L0.3 3.7Z" fill="#b0b0b0"/></svg>
<span class="t" style="left:17.2px;top:136.6px">Seleccionar <u>p</u>or condición</span>
<svg class="arr" style="left:129px;top:138.3px" viewBox="0 0 3 4"><path d="M0.3 0.3 L2.8 2 L0.3 3.7Z" fill="#b0b0b0"/></svg>
<span class="t" style="left:17.2px;top:147.4px">Seleccionar <u>v</u>inculado</span>
<svg class="arr" style="left:129px;top:149.1px" viewBox="0 0 3 4"><path d="M0.3 0.3 L2.8 2 L0.3 3.7Z" fill="#b0b0b0"/></svg>
<div style="left:1.5px;top:156.9px;width:132.3px;height:9.6px;background:#3f3f3f;border-radius:2px"></div>
<span class="t" style="left:17.2px;top:158.2px">Seleccionar <u>b</u>ucles</span>
<svg class="arr" style="left:129px;top:159.9px" viewBox="0 0 3 4"><path d="M0.3 0.3 L2.8 2 L0.3 3.7Z" fill="#b0b0b0"/></svg>
<div class="sp" style="top:169.5px"></div>
<span class="t" style="left:17.2px;top:172.6px">Bo<u>r</u>des definidos</span>
<span class="t" style="left:17.2px;top:183.4px">Lado del activo</span>
<div class="sp" style="top:194.5px"></div>
<span class="t" style="left:17.2px;top:197.8px;color:#686868">Por atrib<u>u</u>to</span>
</div>
<div id="sub">
<div style="left:1.5px;top:13.3px;width:137.5px;height:9.7px;background:#3f3f3f;border-radius:2px"></div>
<div style="left:4px;top:25px;width:133px;height:0.6px;background:#2f2f2f"></div>
<span class="t" style="left:17.2px;top:3.7px"><u>B</u>ucles de bordes</span>
<span class="t" style="left:17.2px;top:14.6px"><u>A</u>nillos de bordes</span>
</div>
<div id="tip"><span class="t" style="left:7.4px;top:4.6px;color:#f2f2f2;font-size:6.4px">Seleccionar un bucle de bordes conectados por tipo de conexión.</span></div><div id="outl"><div style="left:0.85px;top:0;width:171px;height:164.4px">
<div class="hd"></div>
<div class="b" style="left:5px;width:16px"></div>
<svg style="left:6.5px;top:2.8px" width="8" height="8" viewBox="0 0 8 8"><rect x="0.5" y="0.3" width="2.4" height="2" fill="#e6e6e6"/><path d="M1.7 2.3 V6.6 H3.4 M1.7 4.3 H3.4" stroke="#ccc" stroke-width="0.6" fill="none"/><rect x="3.6" y="3.5" width="3.8" height="1.5" fill="#e6e6e6"/><rect x="3.6" y="5.9" width="3.8" height="1.5" fill="#e6e6e6"/></svg>
<svg style="left:15.0px;top:4.5px" width="5" height="5" viewBox="0 0 5 5"><path d="M0.6 1.2 L2.5 3.2 L4.4 1.2" stroke="#ccc" stroke-width="0.7" fill="none"/></svg>
<div class="b" style="left:25px;width:16px"></div>
<svg style="left:26.5px;top:2.8px" width="8" height="8" viewBox="0 0 8 8"><rect x="0.4" y="2.6" width="5" height="5" fill="#8a8a8a"/><rect x="1.6" y="1.5" width="5" height="5" fill="#b0b0b0"/><rect x="2.8" y="0.4" width="4.8" height="4.8" fill="#e6e6e6"/><path d="M3.4 4.6 L5 2.6 L6.2 3.8 L7 3 V4.6Z" fill="#444"/></svg>
<svg style="left:35.0px;top:4.5px" width="5" height="5" viewBox="0 0 5 5"><path d="M0.6 1.2 L2.5 3.2 L4.4 1.2" stroke="#ccc" stroke-width="0.7" fill="none"/></svg>
<div class="b" style="left:51.5px;width:62.5px;background:#1d1d1d;border:0.5px solid #3a3a3a"></div>
<svg style="left:54px;top:3px" width="7" height="8" viewBox="0 0 7 8"><circle cx="4.2" cy="2.8" r="2.1" stroke="#ddd" stroke-width="0.8" fill="none"/><path d="M2.8 4.4 L0.6 7" stroke="#ddd" stroke-width="0.9"/></svg>
<span class="t" style="left:65.5px;top:2.8px;color:#5e5e5e">Buscar</span>
<div class="b" style="left:144px;width:16.5px"></div>
<svg style="left:145.5px;top:3px" width="8" height="8" viewBox="0 0 8 8"><path d="M0.8 0.8 H7.2 L4.8 3.8 V7 L3.2 6 V3.8Z" stroke="#ddd" stroke-width="0.7" fill="none"/></svg>
<svg style="left:153.5px;top:4.5px" width="5" height="5" viewBox="0 0 5 5"><path d="M0.6 1.2 L2.5 3.2 L4.4 1.2" stroke="#ccc" stroke-width="0.7" fill="none"/></svg>
<div class="b" style="left:163.5px;width:12px;background:#545454"></div>
<svg style="left:165px;top:3px" width="8" height="8" viewBox="0 0 8 8"><rect x="0.4" y="1.6" width="7" height="1.6" fill="#e2e2e2"/><path d="M0.9 3.6 H7 V7.6 H0.9Z" fill="#e2e2e2"/><circle cx="6.6" cy="1.2" r="1.4" fill="#e2e2e2"/></svg>
<div style="left:0;top:25.38px;width:171px;height:10.75px;background:#2b2b2b"></div>
<div style="left:0;top:46.88px;width:171px;height:10.75px;background:#2b2b2b"></div>
<div style="left:0;top:68.38px;width:171px;height:10.75px;background:#2b2b2b"></div>
<div style="left:0;top:89.88px;width:171px;height:10.75px;background:#2b2b2b"></div>
<div style="left:0;top:111.38px;width:171px;height:10.75px;background:#2b2b2b"></div>
<div style="left:0;top:132.88px;width:171px;height:10.75px;background:#2b2b2b"></div>
<div style="left:0;top:154.38px;width:171px;height:10.75px;background:#2b2b2b"></div>
<div style="left:0;top:79.22px;width:171px;height:10.55px;background:#334d80"></div>
<div style="left:15.200000000000045px;top:37.0px;width:0.6px;height:114px;background:#555"></div>
<svg style="left:11.6px;top:16.0px" width="8" height="8" viewBox="0 0 8 8"><rect x="0.4" y="0.6" width="7.2" height="1.9" fill="#e2e2e2"/><path d="M0.9 3 H7.1 V7.4 H0.9Z" fill="#e2e2e2"/><rect x="3" y="3.8" width="2" height="1" fill="#282828"/></svg>
<span class="t" style="left:23.5px;top:15.8px">Colección de la escena</span>
<svg style="left:13.1px;top:28.2px" width="5" height="5" viewBox="0 0 5 5"><path d="M0.6 1.2 L2.5 3.2 L4.4 1.2" stroke="#aaa" stroke-width="0.7" fill="none"/></svg>
<div style="left:21.299999999999955px;top:25.9px;width:9.6px;height:9.6px;border-radius:2px;background:#3c3c3c;border:0.5px solid #606060"></div>
<svg style="left:22.0px;top:26.8px" width="8" height="8" viewBox="0 0 8 8"><rect x="0.4" y="0.6" width="7.2" height="1.9" fill="#e2e2e2"/><path d="M0.9 3 H7.1 V7.4 H0.9Z" fill="#e2e2e2"/><rect x="3" y="3.8" width="2" height="1" fill="#282828"/></svg>
<span class="t" style="left:34px;top:26.6px">Collection</span>
<svg style="left:142.0px;top:27.2px" width="7" height="7" viewBox="0 0 7 7"><rect x="0.3" y="0.3" width="6.4" height="6.4" rx="1" fill="#e6e6e6"/><path d="M1.6 3.6 L3 5 L5.4 2" stroke="#222" stroke-width="0.9" fill="none"/></svg>
<svg style="left:152.5px;top:26.8px" width="8" height="8" viewBox="0 0 8 8"><path d="M0.6 4 Q4 0.6 7.4 4 Q4 7.4 0.6 4Z" stroke="#dcdcdc" stroke-width="0.7" fill="none"/><circle cx="4" cy="4" r="1.3" fill="#dcdcdc"/></svg>
<svg style="left:163.5px;top:26.8px" width="8" height="8" viewBox="0 0 8 8"><path d="M0.6 2.4 H2.4 L3 1.4 H5 L5.6 2.4 H7.4 V6.8 H0.6Z" fill="#cfcfcf"/><circle cx="4" cy="4.5" r="1.4" fill="#282828"/></svg>
<svg style="left:23.5px;top:39.0px" width="5" height="5" viewBox="0 0 5 5"><path d="M1.4 0.6 L3.4 2.5 L1.4 4.4" stroke="#d0d0d0" stroke-width="0.7" fill="none"/></svg>
<svg style="left:32.5px;top:37.5px" width="9" height="8" viewBox="0 0 9 8"><circle cx="2.4" cy="2.2" r="1.6" stroke="#e08a3c" stroke-width="0.9" fill="none"/><circle cx="5.8" cy="2.2" r="1.6" stroke="#e08a3c" stroke-width="0.9" fill="none"/><rect x="1" y="4" width="5.6" height="3.2" rx="0.6" fill="#e08a3c"/><path d="M6.8 5.6 L8.6 4.4 V6.9Z" fill="#e08a3c"/></svg>
<span class="t" style="left:45px;top:37.6px;color:#f0f0f0">Camera</span>
<div style="left:77.5px;top:36.6px;width:10px;height:9.8px;border-radius:2px;background:#4a4a4a;border:0.5px solid #666"></div>
<svg style="left:78.0px;top:37.5px" width="9" height="8" viewBox="0 0 9 8"><circle cx="2.4" cy="2.2" r="1.5" stroke="#1fa88a" stroke-width="0.8" fill="none"/><circle cx="5.8" cy="2.2" r="1.5" stroke="#1fa88a" stroke-width="0.8" fill="none"/><rect x="1" y="4" width="5.6" height="3.2" rx="0.6" stroke="#1fa88a" stroke-width="0.8" fill="none"/><path d="M6.8 5.6 L8.6 4.4 V6.9Z" fill="#1fa88a"/></svg>
<svg style="left:152.5px;top:37.5px" width="8" height="8" viewBox="0 0 8 8"><path d="M0.6 4 Q4 0.6 7.4 4 Q4 7.4 0.6 4Z" stroke="#dcdcdc" stroke-width="0.7" fill="none"/><circle cx="4" cy="4" r="1.3" fill="#dcdcdc"/></svg>
<svg style="left:163.5px;top:37.5px" width="8" height="8" viewBox="0 0 8 8"><path d="M0.6 2.4 H2.4 L3 1.4 H5 L5.6 2.4 H7.4 V6.8 H0.6Z" fill="#cfcfcf"/><circle cx="4" cy="4.5" r="1.4" fill="#282828"/></svg>
<div style="left:4px;top:51.2px;width:2px;height:2px;background:#e6e6e6;border-radius:0.4px"></div>
<svg style="left:23.5px;top:49.8px" width="5" height="5" viewBox="0 0 5 5"><path d="M1.4 0.6 L3.4 2.5 L1.4 4.4" stroke="#6a6a6a" stroke-width="0.7" fill="none"/></svg>
<svg style="left:33.0px;top:48.2px" width="8" height="8" viewBox="0 0 8 8"><path d="M1 1.3 H7 L4 7Z" stroke="#96602f" stroke-width="1.1" fill="none" stroke-linejoin="round"/></svg>
<span class="t" style="left:45px;top:48.4px;color:#7a7a7a">Cilindro</span>
<svg style="left:79.5px;top:48.2px" width="8" height="8" viewBox="0 0 8 8"><path d="M1.3 1.5 H6.7 L4 6.6Z" stroke="#178068" stroke-width="0.7" fill="none"/><circle cx="1.3" cy="1.5" r="0.9" fill="#178068"/><circle cx="6.7" cy="1.5" r="0.9" fill="#178068"/><circle cx="4" cy="6.7" r="0.9" fill="#178068"/></svg>
<svg style="left:152.5px;top:48.2px" width="8" height="8" viewBox="0 0 8 8"><path d="M0.8 3.6 Q4 6.6 7.2 3.6" stroke="#8c8c8c" stroke-width="0.7" fill="none"/></svg>
<svg style="left:163.5px;top:48.2px" width="8" height="8" viewBox="0 0 8 8"><path d="M0.6 2.4 H2.4 L3 1.4 H5 L5.6 2.4 H7.4 V6.8 H0.6Z" fill="#cfcfcf"/><circle cx="4" cy="4.5" r="1.4" fill="#282828"/></svg>
<div style="left:4px;top:62.0px;width:2px;height:2px;background:#e6e6e6;border-radius:0.4px"></div>
<svg style="left:23.5px;top:60.5px" width="5" height="5" viewBox="0 0 5 5"><path d="M1.4 0.6 L3.4 2.5 L1.4 4.4" stroke="#6a6a6a" stroke-width="0.7" fill="none"/></svg>
<svg style="left:33.0px;top:59.0px" width="8" height="8" viewBox="0 0 8 8"><path d="M1 1.3 H7 L4 7Z" stroke="#96602f" stroke-width="1.1" fill="none" stroke-linejoin="round"/></svg>
<span class="t" style="left:45px;top:59.1px;color:#7a7a7a">Cilindro.001</span>
<svg style="left:92.0px;top:59.0px" width="8" height="8" viewBox="0 0 8 8"><path d="M1.3 1.5 H6.7 L4 6.6Z" stroke="#178068" stroke-width="0.7" fill="none"/><circle cx="1.3" cy="1.5" r="0.9" fill="#178068"/><circle cx="6.7" cy="1.5" r="0.9" fill="#178068"/><circle cx="4" cy="6.7" r="0.9" fill="#178068"/></svg>
<svg style="left:152.5px;top:59.0px" width="8" height="8" viewBox="0 0 8 8"><path d="M0.8 3.6 Q4 6.6 7.2 3.6" stroke="#8c8c8c" stroke-width="0.7" fill="none"/></svg>
<svg style="left:163.5px;top:59.0px" width="8" height="8" viewBox="0 0 8 8"><path d="M0.6 2.4 H2.4 L3 1.4 H5 L5.6 2.4 H7.4 V6.8 H0.6Z" fill="#cfcfcf"/><circle cx="4" cy="4.5" r="1.4" fill="#282828"/></svg>
<div style="left:4px;top:72.8px;width:2px;height:2px;background:#e6e6e6;border-radius:0.4px"></div>
<svg style="left:23.5px;top:71.2px" width="5" height="5" viewBox="0 0 5 5"><path d="M1.4 0.6 L3.4 2.5 L1.4 4.4" stroke="#d0d0d0" stroke-width="0.7" fill="none"/></svg>
<svg style="left:33.0px;top:69.8px" width="8" height="8" viewBox="0 0 8 8"><path d="M1 1.3 H7 L4 7Z" stroke="#e08a3c" stroke-width="1.1" fill="none" stroke-linejoin="round"/></svg>
<span class="t" style="left:45px;top:69.9px;color:#f0f0f0">Cilindro.002</span>
<svg style="left:92.0px;top:69.8px" width="8" height="8" viewBox="0 0 8 8"><path d="M1.2 6.8 L4.4 3.6" stroke="#5a78c0" stroke-width="1.5" stroke-linecap="round"/><path d="M6.9 1.2 L5.4 2.6 L5.6 1 A2 2 0 1 0 7 2.6 Z" fill="#5a78c0"/><circle cx="5.4" cy="2.4" r="1.7" stroke="#5a78c0" stroke-width="0.9" fill="none" stroke-dasharray="7 3" stroke-dashoffset="-1"/></svg>
<svg style="left:103.0px;top:69.8px" width="8" height="8" viewBox="0 0 8 8"><path d="M1.3 1.5 H6.7 L4 6.6Z" stroke="#1fa88a" stroke-width="0.7" fill="none"/><circle cx="1.3" cy="1.5" r="0.9" fill="#1fa88a"/><circle cx="6.7" cy="1.5" r="0.9" fill="#1fa88a"/><circle cx="4" cy="6.7" r="0.9" fill="#1fa88a"/></svg>
<svg style="left:152.5px;top:69.8px" width="8" height="8" viewBox="0 0 8 8"><path d="M0.6 4 Q4 0.6 7.4 4 Q4 7.4 0.6 4Z" stroke="#dcdcdc" stroke-width="0.7" fill="none"/><circle cx="4" cy="4" r="1.3" fill="#dcdcdc"/></svg>
<svg style="left:163.5px;top:69.8px" width="8" height="8" viewBox="0 0 8 8"><path d="M0.6 2.4 H2.4 L3 1.4 H5 L5.6 2.4 H7.4 V6.8 H0.6Z" fill="#cfcfcf"/><circle cx="4" cy="4.5" r="1.4" fill="#282828"/></svg>
<svg style="left:1px;top:80.5px" width="8" height="8" viewBox="0 0 8 8"><path d="M1.4 1.4 H6.4 M1.4 1.4 V6.6 H6.6 V1.6" stroke="#dfe6f5" stroke-width="0.7" fill="none"/><rect x="5.2" y="0.2" width="2.4" height="2.4" fill="#fff"/><rect x="0.4" y="0.6" width="1.8" height="1.8" fill="#dfe6f5"/><rect x="0.4" y="5.6" width="1.8" height="1.8" fill="#dfe6f5"/><rect x="5.6" y="5.6" width="1.8" height="1.8" fill="#dfe6f5"/></svg>
<svg style="left:23.5px;top:82.0px" width="5" height="5" viewBox="0 0 5 5"><path d="M1.4 0.6 L3.4 2.5 L1.4 4.4" stroke="#d0d0d0" stroke-width="0.7" fill="none"/></svg>
<div style="left:32.200000000000045px;top:79.7px;width:9.6px;height:9.6px;border-radius:2px;background:#5a6f9c"></div>
<svg style="left:33.0px;top:80.5px" width="8" height="8" viewBox="0 0 8 8"><path d="M1 1.3 H7 L4 7Z" stroke="#e08a3c" stroke-width="1.1" fill="none" stroke-linejoin="round"/></svg>
<span class="t" style="left:45px;top:80.7px;color:#f0a63a">Cilindro.003</span>
<svg style="left:91.7px;top:80.5px" width="8" height="8" viewBox="0 0 8 8"><path d="M1.2 6.8 L4.4 3.6" stroke="#5a78c0" stroke-width="1.5" stroke-linecap="round"/><path d="M6.9 1.2 L5.4 2.6 L5.6 1 A2 2 0 1 0 7 2.6 Z" fill="#5a78c0"/><circle cx="5.4" cy="2.4" r="1.7" stroke="#5a78c0" stroke-width="0.9" fill="none" stroke-dasharray="7 3" stroke-dashoffset="-1"/></svg>
<div style="left:102.5px;top:79.7px;width:9.6px;height:9.6px;border-radius:2px;background:#3f6a78;border:0.5px solid #5f8894"></div>
<svg style="left:103.3px;top:80.5px" width="8" height="8" viewBox="0 0 8 8"><path d="M1.3 1.5 H6.7 L4 6.6Z" stroke="#25c09c" stroke-width="0.7" fill="none"/><circle cx="1.3" cy="1.5" r="0.9" fill="#25c09c"/><circle cx="6.7" cy="1.5" r="0.9" fill="#25c09c"/><circle cx="4" cy="6.7" r="0.9" fill="#25c09c"/></svg>
<svg style="left:152.5px;top:80.5px" width="8" height="8" viewBox="0 0 8 8"><path d="M0.6 4 Q4 0.6 7.4 4 Q4 7.4 0.6 4Z" stroke="#dcdcdc" stroke-width="0.7" fill="none"/><circle cx="4" cy="4" r="1.3" fill="#dcdcdc"/></svg>
<svg style="left:163.5px;top:80.5px" width="8" height="8" viewBox="0 0 8 8"><path d="M0.6 2.4 H2.4 L3 1.4 H5 L5.6 2.4 H7.4 V6.8 H0.6Z" fill="#cfcfcf"/><circle cx="4" cy="4.5" r="1.4" fill="#282828"/></svg>
<div style="left:4px;top:94.2px;width:2px;height:2px;background:#e6e6e6;border-radius:0.4px"></div>
<svg style="left:23.5px;top:92.8px" width="5" height="5" viewBox="0 0 5 5"><path d="M1.4 0.6 L3.4 2.5 L1.4 4.4" stroke="#6a6a6a" stroke-width="0.7" fill="none"/></svg>
<svg style="left:33.0px;top:91.2px" width="8" height="8" viewBox="0 0 8 8"><path d="M1 1.3 H7 L4 7Z" stroke="#96602f" stroke-width="1.1" fill="none" stroke-linejoin="round"/></svg>
<span class="t" style="left:45px;top:91.4px;color:#7a7a7a">Cube</span>
<svg style="left:72.0px;top:91.2px" width="8" height="8" viewBox="0 0 8 8"><path d="M1.3 1.5 H6.7 L4 6.6Z" stroke="#178068" stroke-width="0.7" fill="none"/><circle cx="1.3" cy="1.5" r="0.9" fill="#178068"/><circle cx="6.7" cy="1.5" r="0.9" fill="#178068"/><circle cx="4" cy="6.7" r="0.9" fill="#178068"/></svg>
<svg style="left:152.5px;top:91.2px" width="8" height="8" viewBox="0 0 8 8"><path d="M0.8 3.6 Q4 6.6 7.2 3.6" stroke="#8c8c8c" stroke-width="0.7" fill="none"/></svg>
<svg style="left:163.5px;top:91.2px" width="8" height="8" viewBox="0 0 8 8"><path d="M0.6 2.4 H2.4 L3 1.4 H5 L5.6 2.4 H7.4 V6.8 H0.6Z" fill="#cfcfcf"/><circle cx="4" cy="4.5" r="1.4" fill="#282828"/></svg>
<div style="left:4px;top:105.0px;width:2px;height:2px;background:#e6e6e6;border-radius:0.4px"></div>
<svg style="left:23.5px;top:103.5px" width="5" height="5" viewBox="0 0 5 5"><path d="M1.4 0.6 L3.4 2.5 L1.4 4.4" stroke="#6a6a6a" stroke-width="0.7" fill="none"/></svg>
<svg style="left:33.0px;top:102.0px" width="8" height="8" viewBox="0 0 8 8"><path d="M1 1.3 H7 L4 7Z" stroke="#96602f" stroke-width="1.1" fill="none" stroke-linejoin="round"/></svg>
<span class="t" style="left:45px;top:102.2px;color:#7a7a7a">Cubo</span>
<svg style="left:72.7px;top:102.0px" width="8" height="8" viewBox="0 0 8 8"><path d="M1.3 1.5 H6.7 L4 6.6Z" stroke="#178068" stroke-width="0.7" fill="none"/><circle cx="1.3" cy="1.5" r="0.9" fill="#178068"/><circle cx="6.7" cy="1.5" r="0.9" fill="#178068"/><circle cx="4" cy="6.7" r="0.9" fill="#178068"/></svg>
<svg style="left:152.5px;top:102.0px" width="8" height="8" viewBox="0 0 8 8"><path d="M0.8 3.6 Q4 6.6 7.2 3.6" stroke="#8c8c8c" stroke-width="0.7" fill="none"/></svg>
<svg style="left:163.5px;top:102.0px" width="8" height="8" viewBox="0 0 8 8"><path d="M0.6 2.4 H2.4 L3 1.4 H5 L5.6 2.4 H7.4 V6.8 H0.6Z" fill="#cfcfcf"/><circle cx="4" cy="4.5" r="1.4" fill="#282828"/></svg>
<div style="left:4px;top:115.8px;width:2px;height:2px;background:#e6e6e6;border-radius:0.4px"></div>
<svg style="left:23.5px;top:114.2px" width="5" height="5" viewBox="0 0 5 5"><path d="M1.4 0.6 L3.4 2.5 L1.4 4.4" stroke="#6a6a6a" stroke-width="0.7" fill="none"/></svg>
<svg style="left:33.0px;top:112.8px" width="8" height="8" viewBox="0 0 8 8"><path d="M1 1.3 H7 L4 7Z" stroke="#96602f" stroke-width="1.1" fill="none" stroke-linejoin="round"/></svg>
<span class="t" style="left:45px;top:112.9px;color:#7a7a7a">Esfera</span>
<svg style="left:74.4px;top:112.8px" width="8" height="8" viewBox="0 0 8 8"><path d="M1.3 1.5 H6.7 L4 6.6Z" stroke="#178068" stroke-width="0.7" fill="none"/><circle cx="1.3" cy="1.5" r="0.9" fill="#178068"/><circle cx="6.7" cy="1.5" r="0.9" fill="#178068"/><circle cx="4" cy="6.7" r="0.9" fill="#178068"/></svg>
<svg style="left:152.5px;top:112.8px" width="8" height="8" viewBox="0 0 8 8"><path d="M0.8 3.6 Q4 6.6 7.2 3.6" stroke="#8c8c8c" stroke-width="0.7" fill="none"/></svg>
<svg style="left:163.5px;top:112.8px" width="8" height="8" viewBox="0 0 8 8"><path d="M0.6 2.4 H2.4 L3 1.4 H5 L5.6 2.4 H7.4 V6.8 H0.6Z" fill="#cfcfcf"/><circle cx="4" cy="4.5" r="1.4" fill="#282828"/></svg>
<svg style="left:23.5px;top:125.0px" width="5" height="5" viewBox="0 0 5 5"><path d="M1.4 0.6 L3.4 2.5 L1.4 4.4" stroke="#6a6a6a" stroke-width="0.7" fill="none"/></svg>
<svg style="left:33px;top:123.5px" width="8" height="8" viewBox="0 0 8 8"><circle cx="4" cy="3" r="2.4" stroke="#96602f" stroke-width="0.8" fill="none"/><path d="M3 5.6 H5 M3.2 6.8 H4.8 M3.2 2.6 H4.8 M4 2.6 V5" stroke="#96602f" stroke-width="0.7"/></svg>
<span class="t" style="left:45px;top:123.7px;color:#7a7a7a">Light</span>
<svg style="left:71.6px;top:123.5px" width="8" height="8" viewBox="0 0 8 8"><circle cx="4" cy="4" r="3.1" stroke="#178068" stroke-width="0.7" fill="none"/><circle cx="4" cy="4" r="0.8" fill="#178068"/></svg>
<svg style="left:152.5px;top:123.5px" width="8" height="8" viewBox="0 0 8 8"><path d="M0.8 3.6 Q4 6.6 7.2 3.6" stroke="#8c8c8c" stroke-width="0.7" fill="none"/></svg>
<svg style="left:163.5px;top:123.5px" width="8" height="8" viewBox="0 0 8 8"><path d="M0.6 2.4 H2.4 L3 1.4 H5 L5.6 2.4 H7.4 V6.8 H0.6Z" fill="#cfcfcf"/><circle cx="4" cy="4.5" r="1.4" fill="#282828"/></svg>
<div style="left:4px;top:137.2px;width:2px;height:2px;background:#e6e6e6;border-radius:0.4px"></div>
<svg style="left:23.5px;top:135.8px" width="5" height="5" viewBox="0 0 5 5"><path d="M1.4 0.6 L3.4 2.5 L1.4 4.4" stroke="#6a6a6a" stroke-width="0.7" fill="none"/></svg>
<svg style="left:33.0px;top:134.2px" width="8" height="8" viewBox="0 0 8 8"><path d="M1 1.3 H7 L4 7Z" stroke="#96602f" stroke-width="1.1" fill="none" stroke-linejoin="round"/></svg>
<span class="t" style="left:45px;top:134.4px;color:#7a7a7a">Toroide</span>
<svg style="left:78.9px;top:134.2px" width="8" height="8" viewBox="0 0 8 8"><path d="M1.3 1.5 H6.7 L4 6.6Z" stroke="#178068" stroke-width="0.7" fill="none"/><circle cx="1.3" cy="1.5" r="0.9" fill="#178068"/><circle cx="6.7" cy="1.5" r="0.9" fill="#178068"/><circle cx="4" cy="6.7" r="0.9" fill="#178068"/></svg>
<svg style="left:152.5px;top:134.2px" width="8" height="8" viewBox="0 0 8 8"><path d="M0.8 3.6 Q4 6.6 7.2 3.6" stroke="#8c8c8c" stroke-width="0.7" fill="none"/></svg>
<svg style="left:163.5px;top:134.2px" width="8" height="8" viewBox="0 0 8 8"><path d="M0.6 2.4 H2.4 L3 1.4 H5 L5.6 2.4 H7.4 V6.8 H0.6Z" fill="#cfcfcf"/><circle cx="4" cy="4.5" r="1.4" fill="#282828"/></svg>
<svg style="left:23.5px;top:146.5px" width="5" height="5" viewBox="0 0 5 5"><path d="M1.4 0.6 L3.4 2.5 L1.4 4.4" stroke="#d0d0d0" stroke-width="0.7" fill="none"/></svg>
<svg style="left:32.8px;top:144.8px" width="8.4" height="8.4" viewBox="0 0 8 8"><rect x="0.2" y="0.2" width="7.6" height="7.6" rx="0.8" fill="#e08a3c"/><path d="M1 7 L3.6 3 L5 5 L5.8 4.2 L7.2 7Z" fill="#222"/><circle cx="5.8" cy="2.2" r="0.8" fill="#222"/></svg>
<span class="t" style="left:45px;top:145.2px;color:#f0f0f0">Vacío</span>
<svg style="left:72.7px;top:145.0px" width="8" height="8" viewBox="0 0 8 8"><rect x="0.4" y="0.4" width="7.2" height="7.2" fill="#7a3a44" stroke="#d0606e" stroke-width="0.6"/><path d="M1 7 L3.4 3.4 L5 5.4 L5.8 4.6 L7 7Z" fill="#d0606e"/></svg>
<svg style="left:152.5px;top:145.0px" width="8" height="8" viewBox="0 0 8 8"><path d="M0.6 4 Q4 0.6 7.4 4 Q4 7.4 0.6 4Z" stroke="#dcdcdc" stroke-width="0.7" fill="none"/><circle cx="4" cy="4" r="1.3" fill="#dcdcdc"/></svg>
<svg style="left:163.5px;top:145.0px" width="8" height="8" viewBox="0 0 8 8"><path d="M0.6 2.4 H2.4 L3 1.4 H5 L5.6 2.4 H7.4 V6.8 H0.6Z" fill="#cfcfcf"/><circle cx="4" cy="4.5" r="1.4" fill="#282828"/></svg>
</div></div><div id="props"><div style="left:0.85px;top:0;width:171px;height:348.5px">
<div style="left:0;top:0;width:171px;height:14px;background:#2d2d2d"></div>
<div class="tabs"></div>
<div style="left:5px;top:2px;width:16px;height:10px;background:#2b2b2b;border-radius:2px"></div>
<svg style="left:6.2px;top:3px" width="8" height="8" viewBox="0 0 8 8"><rect x="0.3" y="0.5" width="7.4" height="3.1" rx="1" fill="#e6e6e6"/><rect x="0.3" y="4.4" width="7.4" height="3.1" rx="1" fill="#e6e6e6"/><rect x="4.4" y="1.2" width="2.4" height="1.6" fill="#303030"/><rect x="1.2" y="5.2" width="2.4" height="1.6" fill="#303030"/></svg>
<svg style="left:15.5px;top:5.8px" width="4" height="3" viewBox="0 0 4 3"><path d="M0.4 0.6 L2 2.2 L3.6 0.6" stroke="#ccc" stroke-width="0.7" fill="none"/></svg>
<div style="left:58px;top:2.3px;width:62px;height:9px;background:#1d1d1d;border-radius:2px"></div>
<svg style="left:60.5px;top:3px" width="7" height="8" viewBox="0 0 7 8"><circle cx="4.2" cy="2.8" r="2.1" stroke="#ddd" stroke-width="0.8" fill="none"/><path d="M2.8 4.4 L0.6 7" stroke="#ddd" stroke-width="0.9"/></svg>
<span class="t" style="left:71px;top:2.9px;color:#5e5e5e">Buscar</span>
<div style="left:163.6px;top:2.2px;width:12px;height:9.4px;background:#272727;border-radius:2px"></div>
<svg style="left:166px;top:6px" width="4" height="3" viewBox="0 0 4 3"><path d="M0.4 0.6 L2 2.2 L3.6 0.6" stroke="#aaa" stroke-width="0.7" fill="none"/></svg>
<div style="left:0;top:152px;width:14.8px;height:13.5px;background:#303030;border-radius:2px 0 0 2px"></div>
<svg style="left:3.4px;top:21.0px" width="8" height="8" viewBox="0 0 8 8"><path d="M1.6 0.6 V3 M1.6 4.4 V7.4 M1 4.4 H2.2 M5.8 3.6 V7.4 M4.2 0.8 L5.8 3.6 L7.4 0.8" stroke="#e0e0e0" stroke-width="0.9" fill="none"/></svg>
<svg style="left:3.4px;top:41.0px" width="8" height="8" viewBox="0 0 8 8"><path d="M0.8 2.6 H7.2 V7 H0.8Z M2.2 2.4 L2.8 1.2 H5.2 L5.8 2.4" stroke="#e0e0e0" stroke-width="0.8" fill="none"/><rect x="4.6" y="3.6" width="1.8" height="2.4" fill="#e0e0e0"/></svg>
<svg style="left:3.4px;top:55.7px" width="8" height="8" viewBox="0 0 8 8"><path d="M1 1 H7 V3.4 H1Z" fill="#e0e0e0"/><path d="M2 3.6 V5.4 H6 V3.6 M2.6 7.2 H5.4" stroke="#e0e0e0" stroke-width="0.8" fill="none"/></svg>
<svg style="left:3.4px;top:70.3px" width="8" height="8" viewBox="0 0 8 8"><rect x="0.6" y="2.6" width="4.6" height="4.6" fill="#8c8c8c"/><rect x="1.8" y="1.4" width="4.8" height="4.8" fill="#b8b8b8"/><rect x="3" y="0.4" width="4.6" height="4.6" fill="#e6e6e6"/><path d="M3.6 4.4 L5 2.6 L6 3.6 L7 3V4.4Z" fill="#333"/></svg>
<svg style="left:3.4px;top:85.6px" width="8" height="8" viewBox="0 0 8 8"><path d="M0.8 7 L2.6 1 L4.4 7Z" fill="#e0e0e0"/><circle cx="5.2" cy="2" r="1.1" fill="#e0e0e0"/><rect x="5" y="4.4" width="2.4" height="2.6" fill="#e0e0e0"/></svg>
<svg style="left:3.4px;top:101.1px" width="8" height="8" viewBox="0 0 8 8"><circle cx="4" cy="4" r="3.3" stroke="#d03848" stroke-width="0.7" fill="none"/><path d="M2 2.2 Q3.6 2.8 3 4.4 Q4.4 5 3.6 6.8 M5 1.2 Q4.6 2.6 6.2 3 Q6 4.6 6.8 5.4" stroke="#d03848" stroke-width="0.9" fill="none"/></svg>
<svg style="left:3.4px;top:120.3px" width="8" height="8" viewBox="0 0 8 8"><rect x="0.5" y="0.8" width="7" height="1.8" fill="#e0e0e0"/><path d="M1.2 3.2 H6.8 V7.2 H1.2Z" stroke="#e0e0e0" stroke-width="0.8" fill="none"/><rect x="3" y="4.2" width="2" height="0.9" fill="#e0e0e0"/></svg>
<svg style="left:3.4px;top:139.3px" width="8" height="8" viewBox="0 0 8 8"><rect x="1.8" y="1.8" width="4.4" height="4.4" fill="#e08a3c"/><path d="M0.5 2 V0.5 H2 M6 0.5 H7.5 V2 M7.5 6 V7.5 H6 M2 7.5 H0.5 V6" stroke="#e08a3c" stroke-width="0.7" fill="none"/></svg>
<svg style="left:3.4px;top:154.0px" width="8" height="8" viewBox="0 0 8 8"><path d="M1.2 6.8 L4.4 3.6" stroke="#6c9ae8" stroke-width="1.6" stroke-linecap="round"/><path d="M7 1.4 L5.6 2.8 L5.4 1.2 A2 2 0 1 0 7.2 3.2Z" fill="#6c9ae8"/><circle cx="5.4" cy="2.6" r="1.6" stroke="#6c9ae8" stroke-width="1" fill="none" stroke-dasharray="7 3" stroke-dashoffset="-1"/></svg>
<svg style="left:3.4px;top:169.0px" width="8" height="8" viewBox="0 0 8 8"><path d="M1.6 1.6 L6.4 3 M1.6 1.6 L4.4 6.6 M1.6 1.6 L7 6.6" stroke="#5c8ae0" stroke-width="0.6"/><circle cx="1.6" cy="1.6" r="1.2" fill="#5c8ae0"/><circle cx="6.6" cy="3" r="0.8" fill="#5c8ae0"/><circle cx="4.4" cy="6.8" r="0.8" fill="#5c8ae0"/><circle cx="7" cy="6.8" r="0.7" fill="#5c8ae0"/></svg>
<svg style="left:3.4px;top:184.3px" width="8" height="8" viewBox="0 0 8 8"><circle cx="4" cy="4.2" r="3" stroke="#5c8ae0" stroke-width="0.8" fill="none"/><circle cx="4" cy="4.2" r="1.1" fill="#5c8ae0"/><circle cx="6.6" cy="1.6" r="0.9" fill="#5c8ae0"/></svg>
<svg style="left:3.4px;top:199.3px" width="8" height="8" viewBox="0 0 8 8"><ellipse cx="3" cy="5" rx="2.4" ry="1.9" transform="rotate(-40 3 5)" stroke="#5c8ae0" stroke-width="0.9" fill="none"/><ellipse cx="5" cy="3" rx="2.4" ry="1.9" transform="rotate(-40 5 3)" stroke="#5c8ae0" stroke-width="0.9" fill="#5c8ae0" fill-opacity="0.5"/></svg>
<svg style="left:3.4px;top:214.3px" width="8" height="8" viewBox="0 0 8 8"><path d="M1.3 1.5 H6.7 L4 6.6Z" stroke="#1fb896" stroke-width="0.8" fill="none"/><circle cx="1.3" cy="1.5" r="1" fill="#1fb896"/><circle cx="6.7" cy="1.5" r="1" fill="#1fb896"/><circle cx="4" cy="6.7" r="1" fill="#1fb896"/></svg>
<svg style="left:3.4px;top:229.3px" width="8" height="8" viewBox="0 0 8 8"><circle cx="4" cy="4" r="3.2" stroke="#e06a74" stroke-width="0.7" fill="none"/><path d="M4 4 V0.8 A3.2 3.2 0 0 1 7.2 4Z M4 4 V7.2 A3.2 3.2 0 0 1 0.8 4Z" fill="#e06a74"/></svg>
<svg style="left:20.399999999999977px;top:19.599999999999994px" width="8" height="8" viewBox="0 0 8 8"><rect x="1.8" y="1.8" width="4.4" height="4.4" fill="#e6e6e6"/><path d="M0.5 2 V0.5 H2 M6 0.5 H7.5 V2 M7.5 6 V7.5 H6 M2 7.5 H0.5 V6" stroke="#e6e6e6" stroke-width="0.7" fill="none"/></svg>
<span class="t" style="left:33px;top:20.199999999999996px">Cilindro.003</span>
<svg style="left:76.5px;top:21.099999999999994px" width="4" height="5" viewBox="0 0 4 5"><path d="M0.8 0.5 L3 2.5 L0.8 4.5" stroke="#ccc" stroke-width="0.7" fill="none"/></svg>
<svg style="left:85px;top:19.599999999999994px" width="8" height="8" viewBox="0 0 8 8"><rect x="0.5" y="0.5" width="7" height="7" rx="1" stroke="#e0e0e0" stroke-width="0.6" fill="none"/><circle cx="4" cy="4" r="2.3" stroke="#e0e0e0" stroke-width="0.7" fill="none"/></svg>
<span class="t" style="left:97.70000000000005px;top:20.199999999999996px">Subdivision</span>
<svg style="left:165px;top:19.599999999999994px" width="8" height="8" viewBox="0 0 8 8"><path d="M5 0.8 L7.2 3 L5.6 3.4 L4.4 5.4 L2.6 3.6 L4.6 2.4Z M3.4 4.6 L1 7" stroke="#b4b4b4" stroke-width="0.7" fill="none"/></svg>
<div class="f" style="left:19.399999999999977px;top:38.19999999999999px;width:160px;height:9.6px;border-radius:2px"></div>
<span class="t" style="left:23.5px;top:38.79999999999999px;font-size:8px;color:#e6e6e6">+</span>
<span class="t" style="left:72px;top:39.19999999999999px;color:#e8e8e8">Agregar modificador</span>
<div style="left:19.299999999999955px;top:54px;width:160px;height:83.2px;background:#3a3a3a;border:0.8px solid #4772b3;border-radius:3px"></div>
<div style="left:20.099999999999955px;top:54.8px;width:160px;height:13.5px;background:#363636;border-radius:2px 0 0 0"></div>
<svg style="left:24px;top:59.30000000000001px" width="4" height="3" viewBox="0 0 4 3"><path d="M0.4 0.6 L2 2.2 L3.6 0.6" stroke="#ccc" stroke-width="0.7" fill="none"/></svg>
<svg style="left:30.799999999999955px;top:56.80000000000001px" width="8" height="8" viewBox="0 0 8 8"><rect x="0.5" y="0.5" width="7" height="7" rx="1" stroke="#e0e0e0" stroke-width="0.6" fill="none"/><circle cx="4" cy="4" r="2.3" stroke="#e0e0e0" stroke-width="0.7" fill="none"/></svg>
<div style="left:45.700000000000045px;top:56.400000000000006px;width:46.5px;height:8.8px;background:#1f1f1f;border-radius:2px"></div>
<span class="t" style="left:49.5px;top:56.70000000000001px;color:#ececec">Subdivision</span>
<div style="left:93px;top:56.19999999999999px;width:10.4px;height:9.2px;background:#545454;border-radius:2px 0 0 2px"></div>
<div style="left:103.79999999999995px;top:56.19999999999999px;width:10.15px;height:9.2px;background:#4772b3"></div>
<div style="left:114.39999999999998px;top:56.19999999999999px;width:10.15px;height:9.2px;background:#4772b3"></div>
<div style="left:125px;top:56.19999999999999px;width:10.15px;height:9.2px;background:#4772b3"></div>
<div style="left:136.39999999999998px;top:56.19999999999999px;width:9.8px;height:9.2px;background:#2a2a2a;border-radius:2px"></div>
<svg style="left:94.49999999999996px;top:57.000000000000014px" width="7.6" height="7.6" viewBox="0 0 8 8"><path d="M1.3 1.5 H6.7 L4 6.6Z" stroke="#e6e6e6" stroke-width="0.8" fill="none"/><circle cx="1.3" cy="1.5" r="1" fill="#e6e6e6"/><circle cx="6.7" cy="1.5" r="1" fill="#e6e6e6"/><circle cx="4" cy="6.7" r="1" fill="#e6e6e6"/></svg>
<svg style="left:105.2px;top:57.000000000000014px" width="7.6" height="7.6" viewBox="0 0 8 8"><path d="M1.4 1.4 H6.4 M1.4 1.4 V6.6 H6.6 V1.6" stroke="#e8eefa" stroke-width="0.7" fill="none"/><rect x="5.2" y="0.2" width="2.4" height="2.4" fill="#fff"/><rect x="0.4" y="0.6" width="1.8" height="1.8" fill="#e8eefa"/><rect x="0.4" y="5.6" width="1.8" height="1.8" fill="#e8eefa"/><rect x="5.6" y="5.6" width="1.8" height="1.8" fill="#e8eefa"/></svg>
<svg style="left:115.90000000000005px;top:57.000000000000014px" width="7.6" height="7.6" viewBox="0 0 8 8"><rect x="0.5" y="1" width="7" height="4.6" rx="0.6" fill="#e8eefa"/><rect x="1.6" y="2" width="4.8" height="2.2" fill="#4772b3" fill-opacity="0.5"/><path d="M2.4 7 H5.6" stroke="#e8eefa" stroke-width="0.9"/></svg>
<svg style="left:126.49999999999996px;top:57.000000000000014px" width="7.6" height="7.6" viewBox="0 0 8 8"><path d="M0.6 2.4 H2.4 L3 1.4 H5 L5.6 2.4 H7.4 V6.8 H0.6Z" fill="#e8eefa"/><circle cx="4" cy="4.5" r="1.4" fill="#4772b3"/></svg>
<svg style="left:139.2px;top:59.300000000000004px" width="4.4" height="3.3" viewBox="0 0 4 3"><path d="M0.4 0.6 L2 2.2 L3.6 0.6" stroke="#ddd" stroke-width="0.75" fill="none"/></svg>
<svg style="left:149.5px;top:58.30000000000001px" width="5" height="5" viewBox="0 0 5 5"><path d="M0.6 0.6 L4.4 4.4 M4.4 0.6 L0.6 4.4" stroke="#ccc" stroke-width="0.7"/></svg>
<svg style="left:164px;top:58.80000000000001px" width="6" height="4" viewBox="0 0 6 4"><g fill="#5a5a5a"><circle cx="0.8" cy="0.8" r="0.5"/><circle cx="2.4" cy="0.8" r="0.5"/><circle cx="4" cy="0.8" r="0.5"/><circle cx="5.6" cy="0.8" r="0.5"/><circle cx="0.8" cy="2.8" r="0.5"/><circle cx="2.4" cy="2.8" r="0.5"/><circle cx="4" cy="2.8" r="0.5"/><circle cx="5.6" cy="2.8" r="0.5"/></g></svg>
<div style="left:23.700000000000045px;top:72px;width:72px;height:9.6px;background:#4772b3;border-radius:2px 0 0 2px"></div>
<div class="f" style="left:95.89999999999998px;top:72px;width:72.7px;height:9.6px;border-radius:0 2px 2px 0"></div>
<span class="t" style="left:39px;top:73px;color:#fff">Catmull - Clark</span>
<span class="t" style="left:122.5px;top:73px;color:#e6e6e6">Simple</span>
<span class="t" style="left:31.600000000000023px;top:86.70000000000002px">Nivel</span>
<span class="t" style="left:56.799999999999955px;top:86.70000000000002px">Vistas</span>
<span class="t" style="right:96.5px;top:97.20000000000002px">Procesar</span>
<div class="f" style="left:80.29999999999995px;top:85.89999999999998px;width:77.7px;height:9px;border-radius:2px 2px 0 0"></div>
<div class="f" style="left:80.29999999999995px;top:95.60000000000002px;width:77.7px;height:9.2px;border-radius:0 0 2px 2px"></div>
<span class="t" style="left:117.39999999999998px;top:86.70000000000002px;color:#e8e8e8">3</span>
<span class="t" style="left:117.39999999999998px;top:97.4px;color:#e8e8e8">2</span>
<div style="left:163px;top:89px;width:2px;height:2px;border-radius:0.5px;background:#d0d0d0"></div>
<div style="left:163px;top:100px;width:2px;height:2px;border-radius:0.5px;background:#d0d0d0"></div>
<div style="left:163px;top:114px;width:2px;height:2px;border-radius:0.5px;background:#d0d0d0"></div>
<div style="left:80.5px;top:111.39999999999998px;width:6.3px;height:6.4px;background:#4772b3;border-radius:1.2px"></div>
<svg style="left:81.20000000000005px;top:112.19999999999999px" width="5" height="5" viewBox="0 0 5 5"><path d="M0.8 2.6 L2 3.9 L4.3 1" stroke="#fff" stroke-width="0.9" fill="none"/></svg>
<span class="t" style="left:88.79999999999995px;top:110.9px">Visualización óptima</span>
<svg style="left:31.399999999999977px;top:128.89999999999998px" width="4" height="5" viewBox="0 0 4 5"><path d="M0.8 0.5 L3 2.5 L0.8 4.5" stroke="#bbb" stroke-width="0.7" fill="none"/></svg>
<span class="t" style="left:38.60000000000002px;top:127.29999999999998px">Avanzado</span>
</div></div><div id="tl">
<div class="hd"></div>
<div class="ruler"></div>
<svg style="left:6px;top:3px" width="8" height="8" viewBox="0 0 8 8"><circle cx="4" cy="4" r="3.6" fill="#e6e6e6"/><path d="M4 4 V1.2 A2.8 2.8 0 0 1 6.2 5.8Z" fill="#2d2d2d"/></svg>
<svg style="left:15.5px;top:5.5px" width="4" height="3" viewBox="0 0 4 3"><path d="M0.4 0.6 L2 2.2 L3.6 0.6" stroke="#ccc" stroke-width="0.7" fill="none"/></svg>
<div class="b" style="left:23.8px;width:52px"></div>
<span class="t" style="left:27.5px;top:3px">Reproducción</span>
<svg style="left:70.5px;top:5.5px" width="4" height="3" viewBox="0 0 4 3"><path d="M0.4 0.6 L2 2.2 L3.6 0.6" stroke="#ccc" stroke-width="0.7" fill="none"/></svg>
<div class="b" style="left:76.8px;width:31.5px"></div>
<span class="t" style="left:80.5px;top:3px">Claves</span>
<svg style="left:103px;top:5.5px" width="4" height="3" viewBox="0 0 4 3"><path d="M0.4 0.6 L2 2.2 L3.6 0.6" stroke="#ccc" stroke-width="0.7" fill="none"/></svg>
<span class="t" style="left:113.7px;top:3px">Vista</span>
<span class="t" style="left:136.7px;top:3px">Marcador</span>
<div class="f" style="left:376px;width:10px;border-radius:2px 0 0 2px"></div>
<svg style="left:378px;top:4px" width="6" height="6" viewBox="0 0 6 6"><circle cx="3" cy="3" r="2.3" stroke="#aaa" stroke-width="0.6" fill="none"/></svg>
<div class="f" style="left:386.3px;width:10px;border-radius:0 2px 2px 0;background:#2f2f2f"></div>
<svg style="left:389.3px;top:5.5px" width="4" height="3" viewBox="0 0 4 3"><path d="M0.4 0.6 L2 2.2 L3.6 0.6" stroke="#555" stroke-width="0.7" fill="none"/></svg>
<div class="f" style="left:400px;width:10.45px;border-radius:2px 0 0 2px"></div>
<svg style="left:401.2px;top:3px" width="8" height="8" viewBox="0 0 8 8"><path d="M1.4 1 V7" stroke="#eee" stroke-width="1"/><path d="M6.6 1 V7 L2.4 4Z" fill="#eee"/></svg>
<div class="f" style="left:410.6px;width:10.45px;border-radius:0"></div>
<svg style="left:411.8px;top:3px" width="8" height="8" viewBox="0 0 8 8"><path d="M2.6 2 L4.6 4 L2.6 6 L0.6 4Z" fill="#eee"/><path d="M7.6 1.6 V6.4 L4.8 4Z" fill="#eee"/></svg>
<div class="f" style="left:421.2px;width:10.45px;border-radius:0"></div>
<svg style="left:422.4px;top:3px" width="8" height="8" viewBox="0 0 8 8"><path d="M6.8 0.8 V7.2 L1.4 4Z" fill="#eee"/></svg>
<div class="f" style="left:431.8px;width:10.45px;border-radius:0"></div>
<svg style="left:433.0px;top:3px" width="8" height="8" viewBox="0 0 8 8"><path d="M1.4 0.8 V7.2 L6.8 4Z" fill="#eee"/></svg>
<div class="f" style="left:442.4px;width:10.45px;border-radius:0"></div>
<svg style="left:443.59999999999997px;top:3px" width="8" height="8" viewBox="0 0 8 8"><path d="M5.4 2 L7.4 4 L5.4 6 L3.4 4Z" fill="#eee"/><path d="M0.4 1.6 V6.4 L3.2 4Z" fill="#eee"/></svg>
<div class="f" style="left:453px;width:10.45px;border-radius:0 2px 2px 0"></div>
<svg style="left:454.2px;top:3px" width="8" height="8" viewBox="0 0 8 8"><path d="M6.6 1 V7" stroke="#eee" stroke-width="1"/><path d="M1.4 1 V7 L5.6 4Z" fill="#eee"/></svg>
<div class="f" style="left:699.5px;width:38.5px;border-radius:2px"></div>
<span class="t" style="left:716.8px;top:3px">1</span>
<svg style="left:743px;top:3px" width="8" height="8" viewBox="0 0 8 8"><circle cx="4" cy="4.4" r="2.8" stroke="#ddd" stroke-width="0.7" fill="none"/><path d="M4 4.4 V2.8 M3 0.8 H5" stroke="#ddd" stroke-width="0.7"/></svg>
<div class="f" style="left:753px;width:49.5px;border-radius:2px 0 0 2px"></div>
<div class="f" style="left:803px;width:43px;border-radius:0 2px 2px 0"></div>
<span class="t" style="left:760.5px;top:3px">Inicio</span><span class="t" style="left:791.8px;top:3px">1</span>
<span class="t" style="left:811px;top:3px">Fin</span><span class="t" style="left:829px;top:3px">250</span>
<svg style="left:0;top:0" width="851" height="40" viewBox="0 0 851 40"><path d="M12.64 26V39.5 M28.44 26V39.5 M44.24 26V39.5 M60.04 26V39.5 M75.84 26V39.5 M91.64 26V39.5 M107.44 26V39.5 M123.24 26V39.5 M139.04 26V39.5 M154.84 26V39.5 M170.64 26V39.5 M186.44 26V39.5 M202.24 26V39.5 M218.04 26V39.5 M233.84 26V39.5 M249.64 26V39.5 M265.44 26V39.5 M281.24 26V39.5 M297.04 26V39.5 M312.84 26V39.5 M328.64 26V39.5 M344.44 26V39.5 M360.24 26V39.5 M376.04 26V39.5 M391.84 26V39.5 M407.64 26V39.5 M423.44 26V39.5 M439.24 26V39.5 M455.04 26V39.5 M470.84 26V39.5 M486.64 26V39.5 M502.44 26V39.5 M518.24 26V39.5 M534.04 26V39.5 M549.84 26V39.5 M565.64 26V39.5 M581.44 26V39.5 M597.24 26V39.5 M613.04 26V39.5 M628.84 26V39.5 M644.64 26V39.5 M660.44 26V39.5 M676.24 26V39.5 M692.04 26V39.5 M707.84 26V39.5 M723.64 26V39.5 M739.44 26V39.5 M755.24 26V39.5 M771.04 26V39.5 M786.84 26V39.5 M802.64 26V39.5 M818.44 26V39.5 M834.24 26V39.5 M850.04 26V39.5" stroke="#222" stroke-width="0.6"/></svg>
<span class="t" style="left:50.8px;width:20px;text-align:center;top:16.6px;color:#c8c8c8">10</span>
<span class="t" style="left:82.4px;width:20px;text-align:center;top:16.6px;color:#c8c8c8">20</span>
<span class="t" style="left:114.0px;width:20px;text-align:center;top:16.6px;color:#c8c8c8">30</span>
<span class="t" style="left:145.6px;width:20px;text-align:center;top:16.6px;color:#c8c8c8">40</span>
<span class="t" style="left:177.2px;width:20px;text-align:center;top:16.6px;color:#c8c8c8">50</span>
<span class="t" style="left:208.8px;width:20px;text-align:center;top:16.6px;color:#c8c8c8">60</span>
<span class="t" style="left:240.4px;width:20px;text-align:center;top:16.6px;color:#c8c8c8">70</span>
<span class="t" style="left:272.0px;width:20px;text-align:center;top:16.6px;color:#c8c8c8">80</span>
<span class="t" style="left:303.6px;width:20px;text-align:center;top:16.6px;color:#c8c8c8">90</span>
<span class="t" style="left:335.2px;width:20px;text-align:center;top:16.6px;color:#c8c8c8">100</span>
<span class="t" style="left:366.8px;width:20px;text-align:center;top:16.6px;color:#c8c8c8">110</span>
<span class="t" style="left:398.4px;width:20px;text-align:center;top:16.6px;color:#c8c8c8">120</span>
<span class="t" style="left:430.0px;width:20px;text-align:center;top:16.6px;color:#c8c8c8">130</span>
<span class="t" style="left:461.6px;width:20px;text-align:center;top:16.6px;color:#c8c8c8">140</span>
<span class="t" style="left:493.2px;width:20px;text-align:center;top:16.6px;color:#c8c8c8">150</span>
<span class="t" style="left:524.8px;width:20px;text-align:center;top:16.6px;color:#c8c8c8">160</span>
<span class="t" style="left:556.4px;width:20px;text-align:center;top:16.6px;color:#c8c8c8">170</span>
<span class="t" style="left:588.0px;width:20px;text-align:center;top:16.6px;color:#c8c8c8">180</span>
<span class="t" style="left:619.6px;width:20px;text-align:center;top:16.6px;color:#c8c8c8">190</span>
<span class="t" style="left:651.2px;width:20px;text-align:center;top:16.6px;color:#c8c8c8">200</span>
<span class="t" style="left:682.8px;width:20px;text-align:center;top:16.6px;color:#c8c8c8">210</span>
<span class="t" style="left:714.4px;width:20px;text-align:center;top:16.6px;color:#c8c8c8">220</span>
<span class="t" style="left:746.0px;width:20px;text-align:center;top:16.6px;color:#c8c8c8">230</span>
<span class="t" style="left:777.6px;width:20px;text-align:center;top:16.6px;color:#c8c8c8">240</span>
<span class="t" style="left:809.2px;width:20px;text-align:center;top:16.6px;color:#c8c8c8">250</span>
<div style="left:3.5px;top:33px;width:844px;height:4.2px;background:#505050;border-radius:2.1px"></div>
<div style="left:4.2px;top:33.5px;width:3.2px;height:3.2px;background:#333;border-radius:1.6px"></div>
<div style="left:843.2px;top:33.5px;width:3.2px;height:3.2px;background:#333;border-radius:1.6px"></div>
<div style="left:30.5px;top:22px;width:1px;height:16.5px;background:#4772b3"></div>
<div style="left:24.6px;top:15.4px;width:12.6px;height:8.6px;background:#4772b3;border-radius:2px"></div>
<span class="t" style="left:21px;width:20px;text-align:center;top:15.8px;color:#fff">1</span>
</div>
<svg style="left:0;top:526px" width="4" height="6" viewBox="0 0 4 6"><path d="M0.4 0.8 L2.6 3 L0.4 5.2" stroke="#777" stroke-width="0.6" fill="none"/></svg>
<svg style="left:847.5px;top:519px" width="4" height="6" viewBox="0 0 4 6"><path d="M3.2 0.8 L1 3 L3.2 5.2" stroke="#999" stroke-width="0.6" fill="none"/></svg>
<div style="left:6px;top:543.8px;width:15px;height:2px;background:#3a3a3a;border-radius:1px"></div>
</div>
</body></html>
